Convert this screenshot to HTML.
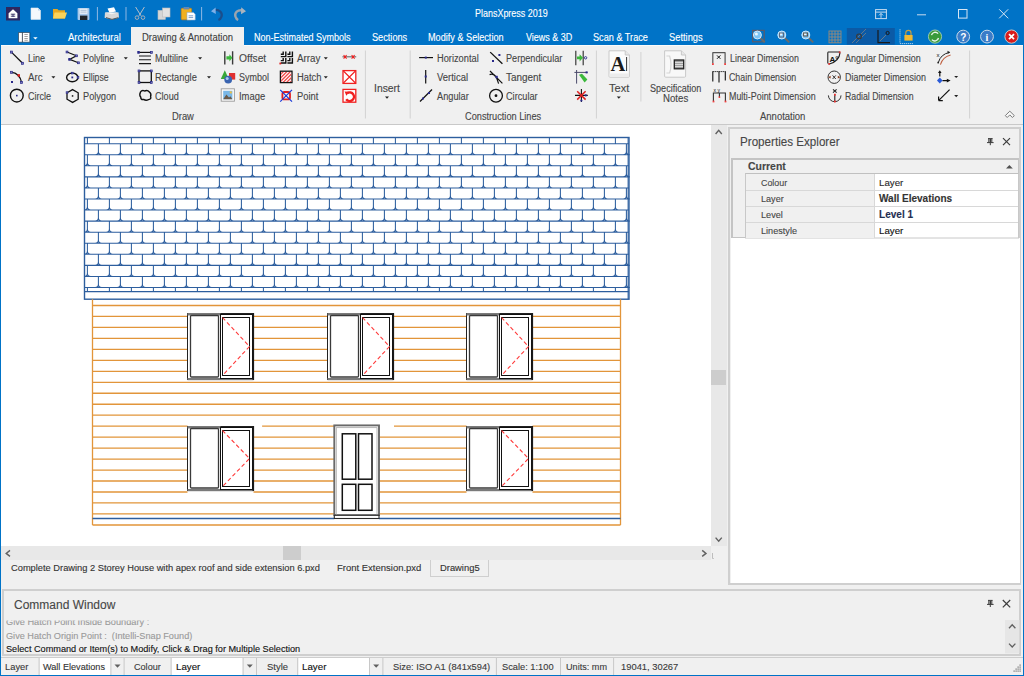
<!DOCTYPE html>
<html><head><meta charset="utf-8"><style>
html,body{margin:0;padding:0}
body{width:1024px;height:676px;overflow:hidden;position:relative;background:#f0f0f0;font-family:"Liberation Sans",sans-serif}
.t{position:absolute;white-space:nowrap;-webkit-text-stroke:0.12px currentColor}
</style></head><body>
<div style="position:absolute;left:0px;top:0px;width:1024px;height:45px;background:#0073c7"></div><div style="position:absolute;left:1px;top:45px;width:1022px;height:79px;background:#f0f0f0;border-top:1px solid #fbfbfb;box-sizing:border-box"></div><div style="position:absolute;left:1px;top:124px;width:1022px;height:1px;background:#c9c9c9"></div><div style="position:absolute;left:131px;top:27px;width:113px;height:19px;background:#f0f0f0"></div><div style="position:absolute;left:1px;top:125px;width:710px;height:421px;background:#ffffff"></div><svg width="1024" height="676" viewBox="0 0 1024 676" style="position:absolute;left:0;top:0"><defs><clipPath id="cv"><rect x="1" y="125" width="710" height="421"/></clipPath></defs><g clip-path="url(#cv)"><path d="M84.5 143.70H629.0M84.5 154.76H629.0M84.5 165.82H629.0M84.5 176.88H629.0M84.5 187.95H629.0M84.5 199.01H629.0M84.5 210.07H629.0M84.5 221.13H629.0M84.5 232.19H629.0M84.5 243.25H629.0M84.5 254.32H629.0M84.5 265.38H629.0M84.5 276.44H629.0M84.5 287.50H629.0M84.5 291.60H629.0M87.40 137.50V143.70M109.40 137.50V143.70M131.40 137.50V143.70M153.40 137.50V143.70M175.40 137.50V143.70M197.40 137.50V143.70M219.40 137.50V143.70M241.40 137.50V143.70M263.40 137.50V143.70M285.40 137.50V143.70M307.40 137.50V143.70M329.40 137.50V143.70M351.40 137.50V143.70M373.40 137.50V143.70M395.40 137.50V143.70M417.40 137.50V143.70M439.40 137.50V143.70M461.40 137.50V143.70M483.40 137.50V143.70M505.40 137.50V143.70M527.40 137.50V143.70M549.40 137.50V143.70M571.40 137.50V143.70M593.40 137.50V143.70M615.40 137.50V143.70M98.40 143.70V151.46Q98.40 154.76 95.10 154.76M98.40 151.46Q98.40 154.76 101.70 154.76M120.40 143.70V151.46Q120.40 154.76 117.10 154.76M120.40 151.46Q120.40 154.76 123.70 154.76M142.40 143.70V151.46Q142.40 154.76 139.10 154.76M142.40 151.46Q142.40 154.76 145.70 154.76M164.40 143.70V151.46Q164.40 154.76 161.10 154.76M164.40 151.46Q164.40 154.76 167.70 154.76M186.40 143.70V151.46Q186.40 154.76 183.10 154.76M186.40 151.46Q186.40 154.76 189.70 154.76M208.40 143.70V151.46Q208.40 154.76 205.10 154.76M208.40 151.46Q208.40 154.76 211.70 154.76M230.40 143.70V151.46Q230.40 154.76 227.10 154.76M230.40 151.46Q230.40 154.76 233.70 154.76M252.40 143.70V151.46Q252.40 154.76 249.10 154.76M252.40 151.46Q252.40 154.76 255.70 154.76M274.40 143.70V151.46Q274.40 154.76 271.10 154.76M274.40 151.46Q274.40 154.76 277.70 154.76M296.40 143.70V151.46Q296.40 154.76 293.10 154.76M296.40 151.46Q296.40 154.76 299.70 154.76M318.40 143.70V151.46Q318.40 154.76 315.10 154.76M318.40 151.46Q318.40 154.76 321.70 154.76M340.40 143.70V151.46Q340.40 154.76 337.10 154.76M340.40 151.46Q340.40 154.76 343.70 154.76M362.40 143.70V151.46Q362.40 154.76 359.10 154.76M362.40 151.46Q362.40 154.76 365.70 154.76M384.40 143.70V151.46Q384.40 154.76 381.10 154.76M384.40 151.46Q384.40 154.76 387.70 154.76M406.40 143.70V151.46Q406.40 154.76 403.10 154.76M406.40 151.46Q406.40 154.76 409.70 154.76M428.40 143.70V151.46Q428.40 154.76 425.10 154.76M428.40 151.46Q428.40 154.76 431.70 154.76M450.40 143.70V151.46Q450.40 154.76 447.10 154.76M450.40 151.46Q450.40 154.76 453.70 154.76M472.40 143.70V151.46Q472.40 154.76 469.10 154.76M472.40 151.46Q472.40 154.76 475.70 154.76M494.40 143.70V151.46Q494.40 154.76 491.10 154.76M494.40 151.46Q494.40 154.76 497.70 154.76M516.40 143.70V151.46Q516.40 154.76 513.10 154.76M516.40 151.46Q516.40 154.76 519.70 154.76M538.40 143.70V151.46Q538.40 154.76 535.10 154.76M538.40 151.46Q538.40 154.76 541.70 154.76M560.40 143.70V151.46Q560.40 154.76 557.10 154.76M560.40 151.46Q560.40 154.76 563.70 154.76M582.40 143.70V151.46Q582.40 154.76 579.10 154.76M582.40 151.46Q582.40 154.76 585.70 154.76M604.40 143.70V151.46Q604.40 154.76 601.10 154.76M604.40 151.46Q604.40 154.76 607.70 154.76M626.40 143.70V151.46Q626.40 154.76 623.10 154.76M626.40 151.46Q626.40 154.76 629.70 154.76M87.40 154.76V162.52Q87.40 165.82 84.10 165.82M87.40 162.52Q87.40 165.82 90.70 165.82M109.40 154.76V162.52Q109.40 165.82 106.10 165.82M109.40 162.52Q109.40 165.82 112.70 165.82M131.40 154.76V162.52Q131.40 165.82 128.10 165.82M131.40 162.52Q131.40 165.82 134.70 165.82M153.40 154.76V162.52Q153.40 165.82 150.10 165.82M153.40 162.52Q153.40 165.82 156.70 165.82M175.40 154.76V162.52Q175.40 165.82 172.10 165.82M175.40 162.52Q175.40 165.82 178.70 165.82M197.40 154.76V162.52Q197.40 165.82 194.10 165.82M197.40 162.52Q197.40 165.82 200.70 165.82M219.40 154.76V162.52Q219.40 165.82 216.10 165.82M219.40 162.52Q219.40 165.82 222.70 165.82M241.40 154.76V162.52Q241.40 165.82 238.10 165.82M241.40 162.52Q241.40 165.82 244.70 165.82M263.40 154.76V162.52Q263.40 165.82 260.10 165.82M263.40 162.52Q263.40 165.82 266.70 165.82M285.40 154.76V162.52Q285.40 165.82 282.10 165.82M285.40 162.52Q285.40 165.82 288.70 165.82M307.40 154.76V162.52Q307.40 165.82 304.10 165.82M307.40 162.52Q307.40 165.82 310.70 165.82M329.40 154.76V162.52Q329.40 165.82 326.10 165.82M329.40 162.52Q329.40 165.82 332.70 165.82M351.40 154.76V162.52Q351.40 165.82 348.10 165.82M351.40 162.52Q351.40 165.82 354.70 165.82M373.40 154.76V162.52Q373.40 165.82 370.10 165.82M373.40 162.52Q373.40 165.82 376.70 165.82M395.40 154.76V162.52Q395.40 165.82 392.10 165.82M395.40 162.52Q395.40 165.82 398.70 165.82M417.40 154.76V162.52Q417.40 165.82 414.10 165.82M417.40 162.52Q417.40 165.82 420.70 165.82M439.40 154.76V162.52Q439.40 165.82 436.10 165.82M439.40 162.52Q439.40 165.82 442.70 165.82M461.40 154.76V162.52Q461.40 165.82 458.10 165.82M461.40 162.52Q461.40 165.82 464.70 165.82M483.40 154.76V162.52Q483.40 165.82 480.10 165.82M483.40 162.52Q483.40 165.82 486.70 165.82M505.40 154.76V162.52Q505.40 165.82 502.10 165.82M505.40 162.52Q505.40 165.82 508.70 165.82M527.40 154.76V162.52Q527.40 165.82 524.10 165.82M527.40 162.52Q527.40 165.82 530.70 165.82M549.40 154.76V162.52Q549.40 165.82 546.10 165.82M549.40 162.52Q549.40 165.82 552.70 165.82M571.40 154.76V162.52Q571.40 165.82 568.10 165.82M571.40 162.52Q571.40 165.82 574.70 165.82M593.40 154.76V162.52Q593.40 165.82 590.10 165.82M593.40 162.52Q593.40 165.82 596.70 165.82M615.40 154.76V162.52Q615.40 165.82 612.10 165.82M615.40 162.52Q615.40 165.82 618.70 165.82M98.40 165.82V173.58Q98.40 176.88 95.10 176.88M98.40 173.58Q98.40 176.88 101.70 176.88M120.40 165.82V173.58Q120.40 176.88 117.10 176.88M120.40 173.58Q120.40 176.88 123.70 176.88M142.40 165.82V173.58Q142.40 176.88 139.10 176.88M142.40 173.58Q142.40 176.88 145.70 176.88M164.40 165.82V173.58Q164.40 176.88 161.10 176.88M164.40 173.58Q164.40 176.88 167.70 176.88M186.40 165.82V173.58Q186.40 176.88 183.10 176.88M186.40 173.58Q186.40 176.88 189.70 176.88M208.40 165.82V173.58Q208.40 176.88 205.10 176.88M208.40 173.58Q208.40 176.88 211.70 176.88M230.40 165.82V173.58Q230.40 176.88 227.10 176.88M230.40 173.58Q230.40 176.88 233.70 176.88M252.40 165.82V173.58Q252.40 176.88 249.10 176.88M252.40 173.58Q252.40 176.88 255.70 176.88M274.40 165.82V173.58Q274.40 176.88 271.10 176.88M274.40 173.58Q274.40 176.88 277.70 176.88M296.40 165.82V173.58Q296.40 176.88 293.10 176.88M296.40 173.58Q296.40 176.88 299.70 176.88M318.40 165.82V173.58Q318.40 176.88 315.10 176.88M318.40 173.58Q318.40 176.88 321.70 176.88M340.40 165.82V173.58Q340.40 176.88 337.10 176.88M340.40 173.58Q340.40 176.88 343.70 176.88M362.40 165.82V173.58Q362.40 176.88 359.10 176.88M362.40 173.58Q362.40 176.88 365.70 176.88M384.40 165.82V173.58Q384.40 176.88 381.10 176.88M384.40 173.58Q384.40 176.88 387.70 176.88M406.40 165.82V173.58Q406.40 176.88 403.10 176.88M406.40 173.58Q406.40 176.88 409.70 176.88M428.40 165.82V173.58Q428.40 176.88 425.10 176.88M428.40 173.58Q428.40 176.88 431.70 176.88M450.40 165.82V173.58Q450.40 176.88 447.10 176.88M450.40 173.58Q450.40 176.88 453.70 176.88M472.40 165.82V173.58Q472.40 176.88 469.10 176.88M472.40 173.58Q472.40 176.88 475.70 176.88M494.40 165.82V173.58Q494.40 176.88 491.10 176.88M494.40 173.58Q494.40 176.88 497.70 176.88M516.40 165.82V173.58Q516.40 176.88 513.10 176.88M516.40 173.58Q516.40 176.88 519.70 176.88M538.40 165.82V173.58Q538.40 176.88 535.10 176.88M538.40 173.58Q538.40 176.88 541.70 176.88M560.40 165.82V173.58Q560.40 176.88 557.10 176.88M560.40 173.58Q560.40 176.88 563.70 176.88M582.40 165.82V173.58Q582.40 176.88 579.10 176.88M582.40 173.58Q582.40 176.88 585.70 176.88M604.40 165.82V173.58Q604.40 176.88 601.10 176.88M604.40 173.58Q604.40 176.88 607.70 176.88M626.40 165.82V173.58Q626.40 176.88 623.10 176.88M626.40 173.58Q626.40 176.88 629.70 176.88M87.40 176.88V184.65Q87.40 187.95 84.10 187.95M87.40 184.65Q87.40 187.95 90.70 187.95M109.40 176.88V184.65Q109.40 187.95 106.10 187.95M109.40 184.65Q109.40 187.95 112.70 187.95M131.40 176.88V184.65Q131.40 187.95 128.10 187.95M131.40 184.65Q131.40 187.95 134.70 187.95M153.40 176.88V184.65Q153.40 187.95 150.10 187.95M153.40 184.65Q153.40 187.95 156.70 187.95M175.40 176.88V184.65Q175.40 187.95 172.10 187.95M175.40 184.65Q175.40 187.95 178.70 187.95M197.40 176.88V184.65Q197.40 187.95 194.10 187.95M197.40 184.65Q197.40 187.95 200.70 187.95M219.40 176.88V184.65Q219.40 187.95 216.10 187.95M219.40 184.65Q219.40 187.95 222.70 187.95M241.40 176.88V184.65Q241.40 187.95 238.10 187.95M241.40 184.65Q241.40 187.95 244.70 187.95M263.40 176.88V184.65Q263.40 187.95 260.10 187.95M263.40 184.65Q263.40 187.95 266.70 187.95M285.40 176.88V184.65Q285.40 187.95 282.10 187.95M285.40 184.65Q285.40 187.95 288.70 187.95M307.40 176.88V184.65Q307.40 187.95 304.10 187.95M307.40 184.65Q307.40 187.95 310.70 187.95M329.40 176.88V184.65Q329.40 187.95 326.10 187.95M329.40 184.65Q329.40 187.95 332.70 187.95M351.40 176.88V184.65Q351.40 187.95 348.10 187.95M351.40 184.65Q351.40 187.95 354.70 187.95M373.40 176.88V184.65Q373.40 187.95 370.10 187.95M373.40 184.65Q373.40 187.95 376.70 187.95M395.40 176.88V184.65Q395.40 187.95 392.10 187.95M395.40 184.65Q395.40 187.95 398.70 187.95M417.40 176.88V184.65Q417.40 187.95 414.10 187.95M417.40 184.65Q417.40 187.95 420.70 187.95M439.40 176.88V184.65Q439.40 187.95 436.10 187.95M439.40 184.65Q439.40 187.95 442.70 187.95M461.40 176.88V184.65Q461.40 187.95 458.10 187.95M461.40 184.65Q461.40 187.95 464.70 187.95M483.40 176.88V184.65Q483.40 187.95 480.10 187.95M483.40 184.65Q483.40 187.95 486.70 187.95M505.40 176.88V184.65Q505.40 187.95 502.10 187.95M505.40 184.65Q505.40 187.95 508.70 187.95M527.40 176.88V184.65Q527.40 187.95 524.10 187.95M527.40 184.65Q527.40 187.95 530.70 187.95M549.40 176.88V184.65Q549.40 187.95 546.10 187.95M549.40 184.65Q549.40 187.95 552.70 187.95M571.40 176.88V184.65Q571.40 187.95 568.10 187.95M571.40 184.65Q571.40 187.95 574.70 187.95M593.40 176.88V184.65Q593.40 187.95 590.10 187.95M593.40 184.65Q593.40 187.95 596.70 187.95M615.40 176.88V184.65Q615.40 187.95 612.10 187.95M615.40 184.65Q615.40 187.95 618.70 187.95M98.40 187.95V195.71Q98.40 199.01 95.10 199.01M98.40 195.71Q98.40 199.01 101.70 199.01M120.40 187.95V195.71Q120.40 199.01 117.10 199.01M120.40 195.71Q120.40 199.01 123.70 199.01M142.40 187.95V195.71Q142.40 199.01 139.10 199.01M142.40 195.71Q142.40 199.01 145.70 199.01M164.40 187.95V195.71Q164.40 199.01 161.10 199.01M164.40 195.71Q164.40 199.01 167.70 199.01M186.40 187.95V195.71Q186.40 199.01 183.10 199.01M186.40 195.71Q186.40 199.01 189.70 199.01M208.40 187.95V195.71Q208.40 199.01 205.10 199.01M208.40 195.71Q208.40 199.01 211.70 199.01M230.40 187.95V195.71Q230.40 199.01 227.10 199.01M230.40 195.71Q230.40 199.01 233.70 199.01M252.40 187.95V195.71Q252.40 199.01 249.10 199.01M252.40 195.71Q252.40 199.01 255.70 199.01M274.40 187.95V195.71Q274.40 199.01 271.10 199.01M274.40 195.71Q274.40 199.01 277.70 199.01M296.40 187.95V195.71Q296.40 199.01 293.10 199.01M296.40 195.71Q296.40 199.01 299.70 199.01M318.40 187.95V195.71Q318.40 199.01 315.10 199.01M318.40 195.71Q318.40 199.01 321.70 199.01M340.40 187.95V195.71Q340.40 199.01 337.10 199.01M340.40 195.71Q340.40 199.01 343.70 199.01M362.40 187.95V195.71Q362.40 199.01 359.10 199.01M362.40 195.71Q362.40 199.01 365.70 199.01M384.40 187.95V195.71Q384.40 199.01 381.10 199.01M384.40 195.71Q384.40 199.01 387.70 199.01M406.40 187.95V195.71Q406.40 199.01 403.10 199.01M406.40 195.71Q406.40 199.01 409.70 199.01M428.40 187.95V195.71Q428.40 199.01 425.10 199.01M428.40 195.71Q428.40 199.01 431.70 199.01M450.40 187.95V195.71Q450.40 199.01 447.10 199.01M450.40 195.71Q450.40 199.01 453.70 199.01M472.40 187.95V195.71Q472.40 199.01 469.10 199.01M472.40 195.71Q472.40 199.01 475.70 199.01M494.40 187.95V195.71Q494.40 199.01 491.10 199.01M494.40 195.71Q494.40 199.01 497.70 199.01M516.40 187.95V195.71Q516.40 199.01 513.10 199.01M516.40 195.71Q516.40 199.01 519.70 199.01M538.40 187.95V195.71Q538.40 199.01 535.10 199.01M538.40 195.71Q538.40 199.01 541.70 199.01M560.40 187.95V195.71Q560.40 199.01 557.10 199.01M560.40 195.71Q560.40 199.01 563.70 199.01M582.40 187.95V195.71Q582.40 199.01 579.10 199.01M582.40 195.71Q582.40 199.01 585.70 199.01M604.40 187.95V195.71Q604.40 199.01 601.10 199.01M604.40 195.71Q604.40 199.01 607.70 199.01M626.40 187.95V195.71Q626.40 199.01 623.10 199.01M626.40 195.71Q626.40 199.01 629.70 199.01M87.40 199.01V206.77Q87.40 210.07 84.10 210.07M87.40 206.77Q87.40 210.07 90.70 210.07M109.40 199.01V206.77Q109.40 210.07 106.10 210.07M109.40 206.77Q109.40 210.07 112.70 210.07M131.40 199.01V206.77Q131.40 210.07 128.10 210.07M131.40 206.77Q131.40 210.07 134.70 210.07M153.40 199.01V206.77Q153.40 210.07 150.10 210.07M153.40 206.77Q153.40 210.07 156.70 210.07M175.40 199.01V206.77Q175.40 210.07 172.10 210.07M175.40 206.77Q175.40 210.07 178.70 210.07M197.40 199.01V206.77Q197.40 210.07 194.10 210.07M197.40 206.77Q197.40 210.07 200.70 210.07M219.40 199.01V206.77Q219.40 210.07 216.10 210.07M219.40 206.77Q219.40 210.07 222.70 210.07M241.40 199.01V206.77Q241.40 210.07 238.10 210.07M241.40 206.77Q241.40 210.07 244.70 210.07M263.40 199.01V206.77Q263.40 210.07 260.10 210.07M263.40 206.77Q263.40 210.07 266.70 210.07M285.40 199.01V206.77Q285.40 210.07 282.10 210.07M285.40 206.77Q285.40 210.07 288.70 210.07M307.40 199.01V206.77Q307.40 210.07 304.10 210.07M307.40 206.77Q307.40 210.07 310.70 210.07M329.40 199.01V206.77Q329.40 210.07 326.10 210.07M329.40 206.77Q329.40 210.07 332.70 210.07M351.40 199.01V206.77Q351.40 210.07 348.10 210.07M351.40 206.77Q351.40 210.07 354.70 210.07M373.40 199.01V206.77Q373.40 210.07 370.10 210.07M373.40 206.77Q373.40 210.07 376.70 210.07M395.40 199.01V206.77Q395.40 210.07 392.10 210.07M395.40 206.77Q395.40 210.07 398.70 210.07M417.40 199.01V206.77Q417.40 210.07 414.10 210.07M417.40 206.77Q417.40 210.07 420.70 210.07M439.40 199.01V206.77Q439.40 210.07 436.10 210.07M439.40 206.77Q439.40 210.07 442.70 210.07M461.40 199.01V206.77Q461.40 210.07 458.10 210.07M461.40 206.77Q461.40 210.07 464.70 210.07M483.40 199.01V206.77Q483.40 210.07 480.10 210.07M483.40 206.77Q483.40 210.07 486.70 210.07M505.40 199.01V206.77Q505.40 210.07 502.10 210.07M505.40 206.77Q505.40 210.07 508.70 210.07M527.40 199.01V206.77Q527.40 210.07 524.10 210.07M527.40 206.77Q527.40 210.07 530.70 210.07M549.40 199.01V206.77Q549.40 210.07 546.10 210.07M549.40 206.77Q549.40 210.07 552.70 210.07M571.40 199.01V206.77Q571.40 210.07 568.10 210.07M571.40 206.77Q571.40 210.07 574.70 210.07M593.40 199.01V206.77Q593.40 210.07 590.10 210.07M593.40 206.77Q593.40 210.07 596.70 210.07M615.40 199.01V206.77Q615.40 210.07 612.10 210.07M615.40 206.77Q615.40 210.07 618.70 210.07M98.40 210.07V217.83Q98.40 221.13 95.10 221.13M98.40 217.83Q98.40 221.13 101.70 221.13M120.40 210.07V217.83Q120.40 221.13 117.10 221.13M120.40 217.83Q120.40 221.13 123.70 221.13M142.40 210.07V217.83Q142.40 221.13 139.10 221.13M142.40 217.83Q142.40 221.13 145.70 221.13M164.40 210.07V217.83Q164.40 221.13 161.10 221.13M164.40 217.83Q164.40 221.13 167.70 221.13M186.40 210.07V217.83Q186.40 221.13 183.10 221.13M186.40 217.83Q186.40 221.13 189.70 221.13M208.40 210.07V217.83Q208.40 221.13 205.10 221.13M208.40 217.83Q208.40 221.13 211.70 221.13M230.40 210.07V217.83Q230.40 221.13 227.10 221.13M230.40 217.83Q230.40 221.13 233.70 221.13M252.40 210.07V217.83Q252.40 221.13 249.10 221.13M252.40 217.83Q252.40 221.13 255.70 221.13M274.40 210.07V217.83Q274.40 221.13 271.10 221.13M274.40 217.83Q274.40 221.13 277.70 221.13M296.40 210.07V217.83Q296.40 221.13 293.10 221.13M296.40 217.83Q296.40 221.13 299.70 221.13M318.40 210.07V217.83Q318.40 221.13 315.10 221.13M318.40 217.83Q318.40 221.13 321.70 221.13M340.40 210.07V217.83Q340.40 221.13 337.10 221.13M340.40 217.83Q340.40 221.13 343.70 221.13M362.40 210.07V217.83Q362.40 221.13 359.10 221.13M362.40 217.83Q362.40 221.13 365.70 221.13M384.40 210.07V217.83Q384.40 221.13 381.10 221.13M384.40 217.83Q384.40 221.13 387.70 221.13M406.40 210.07V217.83Q406.40 221.13 403.10 221.13M406.40 217.83Q406.40 221.13 409.70 221.13M428.40 210.07V217.83Q428.40 221.13 425.10 221.13M428.40 217.83Q428.40 221.13 431.70 221.13M450.40 210.07V217.83Q450.40 221.13 447.10 221.13M450.40 217.83Q450.40 221.13 453.70 221.13M472.40 210.07V217.83Q472.40 221.13 469.10 221.13M472.40 217.83Q472.40 221.13 475.70 221.13M494.40 210.07V217.83Q494.40 221.13 491.10 221.13M494.40 217.83Q494.40 221.13 497.70 221.13M516.40 210.07V217.83Q516.40 221.13 513.10 221.13M516.40 217.83Q516.40 221.13 519.70 221.13M538.40 210.07V217.83Q538.40 221.13 535.10 221.13M538.40 217.83Q538.40 221.13 541.70 221.13M560.40 210.07V217.83Q560.40 221.13 557.10 221.13M560.40 217.83Q560.40 221.13 563.70 221.13M582.40 210.07V217.83Q582.40 221.13 579.10 221.13M582.40 217.83Q582.40 221.13 585.70 221.13M604.40 210.07V217.83Q604.40 221.13 601.10 221.13M604.40 217.83Q604.40 221.13 607.70 221.13M626.40 210.07V217.83Q626.40 221.13 623.10 221.13M626.40 217.83Q626.40 221.13 629.70 221.13M87.40 221.13V228.89Q87.40 232.19 84.10 232.19M87.40 228.89Q87.40 232.19 90.70 232.19M109.40 221.13V228.89Q109.40 232.19 106.10 232.19M109.40 228.89Q109.40 232.19 112.70 232.19M131.40 221.13V228.89Q131.40 232.19 128.10 232.19M131.40 228.89Q131.40 232.19 134.70 232.19M153.40 221.13V228.89Q153.40 232.19 150.10 232.19M153.40 228.89Q153.40 232.19 156.70 232.19M175.40 221.13V228.89Q175.40 232.19 172.10 232.19M175.40 228.89Q175.40 232.19 178.70 232.19M197.40 221.13V228.89Q197.40 232.19 194.10 232.19M197.40 228.89Q197.40 232.19 200.70 232.19M219.40 221.13V228.89Q219.40 232.19 216.10 232.19M219.40 228.89Q219.40 232.19 222.70 232.19M241.40 221.13V228.89Q241.40 232.19 238.10 232.19M241.40 228.89Q241.40 232.19 244.70 232.19M263.40 221.13V228.89Q263.40 232.19 260.10 232.19M263.40 228.89Q263.40 232.19 266.70 232.19M285.40 221.13V228.89Q285.40 232.19 282.10 232.19M285.40 228.89Q285.40 232.19 288.70 232.19M307.40 221.13V228.89Q307.40 232.19 304.10 232.19M307.40 228.89Q307.40 232.19 310.70 232.19M329.40 221.13V228.89Q329.40 232.19 326.10 232.19M329.40 228.89Q329.40 232.19 332.70 232.19M351.40 221.13V228.89Q351.40 232.19 348.10 232.19M351.40 228.89Q351.40 232.19 354.70 232.19M373.40 221.13V228.89Q373.40 232.19 370.10 232.19M373.40 228.89Q373.40 232.19 376.70 232.19M395.40 221.13V228.89Q395.40 232.19 392.10 232.19M395.40 228.89Q395.40 232.19 398.70 232.19M417.40 221.13V228.89Q417.40 232.19 414.10 232.19M417.40 228.89Q417.40 232.19 420.70 232.19M439.40 221.13V228.89Q439.40 232.19 436.10 232.19M439.40 228.89Q439.40 232.19 442.70 232.19M461.40 221.13V228.89Q461.40 232.19 458.10 232.19M461.40 228.89Q461.40 232.19 464.70 232.19M483.40 221.13V228.89Q483.40 232.19 480.10 232.19M483.40 228.89Q483.40 232.19 486.70 232.19M505.40 221.13V228.89Q505.40 232.19 502.10 232.19M505.40 228.89Q505.40 232.19 508.70 232.19M527.40 221.13V228.89Q527.40 232.19 524.10 232.19M527.40 228.89Q527.40 232.19 530.70 232.19M549.40 221.13V228.89Q549.40 232.19 546.10 232.19M549.40 228.89Q549.40 232.19 552.70 232.19M571.40 221.13V228.89Q571.40 232.19 568.10 232.19M571.40 228.89Q571.40 232.19 574.70 232.19M593.40 221.13V228.89Q593.40 232.19 590.10 232.19M593.40 228.89Q593.40 232.19 596.70 232.19M615.40 221.13V228.89Q615.40 232.19 612.10 232.19M615.40 228.89Q615.40 232.19 618.70 232.19M98.40 232.19V239.95Q98.40 243.25 95.10 243.25M98.40 239.95Q98.40 243.25 101.70 243.25M120.40 232.19V239.95Q120.40 243.25 117.10 243.25M120.40 239.95Q120.40 243.25 123.70 243.25M142.40 232.19V239.95Q142.40 243.25 139.10 243.25M142.40 239.95Q142.40 243.25 145.70 243.25M164.40 232.19V239.95Q164.40 243.25 161.10 243.25M164.40 239.95Q164.40 243.25 167.70 243.25M186.40 232.19V239.95Q186.40 243.25 183.10 243.25M186.40 239.95Q186.40 243.25 189.70 243.25M208.40 232.19V239.95Q208.40 243.25 205.10 243.25M208.40 239.95Q208.40 243.25 211.70 243.25M230.40 232.19V239.95Q230.40 243.25 227.10 243.25M230.40 239.95Q230.40 243.25 233.70 243.25M252.40 232.19V239.95Q252.40 243.25 249.10 243.25M252.40 239.95Q252.40 243.25 255.70 243.25M274.40 232.19V239.95Q274.40 243.25 271.10 243.25M274.40 239.95Q274.40 243.25 277.70 243.25M296.40 232.19V239.95Q296.40 243.25 293.10 243.25M296.40 239.95Q296.40 243.25 299.70 243.25M318.40 232.19V239.95Q318.40 243.25 315.10 243.25M318.40 239.95Q318.40 243.25 321.70 243.25M340.40 232.19V239.95Q340.40 243.25 337.10 243.25M340.40 239.95Q340.40 243.25 343.70 243.25M362.40 232.19V239.95Q362.40 243.25 359.10 243.25M362.40 239.95Q362.40 243.25 365.70 243.25M384.40 232.19V239.95Q384.40 243.25 381.10 243.25M384.40 239.95Q384.40 243.25 387.70 243.25M406.40 232.19V239.95Q406.40 243.25 403.10 243.25M406.40 239.95Q406.40 243.25 409.70 243.25M428.40 232.19V239.95Q428.40 243.25 425.10 243.25M428.40 239.95Q428.40 243.25 431.70 243.25M450.40 232.19V239.95Q450.40 243.25 447.10 243.25M450.40 239.95Q450.40 243.25 453.70 243.25M472.40 232.19V239.95Q472.40 243.25 469.10 243.25M472.40 239.95Q472.40 243.25 475.70 243.25M494.40 232.19V239.95Q494.40 243.25 491.10 243.25M494.40 239.95Q494.40 243.25 497.70 243.25M516.40 232.19V239.95Q516.40 243.25 513.10 243.25M516.40 239.95Q516.40 243.25 519.70 243.25M538.40 232.19V239.95Q538.40 243.25 535.10 243.25M538.40 239.95Q538.40 243.25 541.70 243.25M560.40 232.19V239.95Q560.40 243.25 557.10 243.25M560.40 239.95Q560.40 243.25 563.70 243.25M582.40 232.19V239.95Q582.40 243.25 579.10 243.25M582.40 239.95Q582.40 243.25 585.70 243.25M604.40 232.19V239.95Q604.40 243.25 601.10 243.25M604.40 239.95Q604.40 243.25 607.70 243.25M626.40 232.19V239.95Q626.40 243.25 623.10 243.25M626.40 239.95Q626.40 243.25 629.70 243.25M87.40 243.25V251.02Q87.40 254.32 84.10 254.32M87.40 251.02Q87.40 254.32 90.70 254.32M109.40 243.25V251.02Q109.40 254.32 106.10 254.32M109.40 251.02Q109.40 254.32 112.70 254.32M131.40 243.25V251.02Q131.40 254.32 128.10 254.32M131.40 251.02Q131.40 254.32 134.70 254.32M153.40 243.25V251.02Q153.40 254.32 150.10 254.32M153.40 251.02Q153.40 254.32 156.70 254.32M175.40 243.25V251.02Q175.40 254.32 172.10 254.32M175.40 251.02Q175.40 254.32 178.70 254.32M197.40 243.25V251.02Q197.40 254.32 194.10 254.32M197.40 251.02Q197.40 254.32 200.70 254.32M219.40 243.25V251.02Q219.40 254.32 216.10 254.32M219.40 251.02Q219.40 254.32 222.70 254.32M241.40 243.25V251.02Q241.40 254.32 238.10 254.32M241.40 251.02Q241.40 254.32 244.70 254.32M263.40 243.25V251.02Q263.40 254.32 260.10 254.32M263.40 251.02Q263.40 254.32 266.70 254.32M285.40 243.25V251.02Q285.40 254.32 282.10 254.32M285.40 251.02Q285.40 254.32 288.70 254.32M307.40 243.25V251.02Q307.40 254.32 304.10 254.32M307.40 251.02Q307.40 254.32 310.70 254.32M329.40 243.25V251.02Q329.40 254.32 326.10 254.32M329.40 251.02Q329.40 254.32 332.70 254.32M351.40 243.25V251.02Q351.40 254.32 348.10 254.32M351.40 251.02Q351.40 254.32 354.70 254.32M373.40 243.25V251.02Q373.40 254.32 370.10 254.32M373.40 251.02Q373.40 254.32 376.70 254.32M395.40 243.25V251.02Q395.40 254.32 392.10 254.32M395.40 251.02Q395.40 254.32 398.70 254.32M417.40 243.25V251.02Q417.40 254.32 414.10 254.32M417.40 251.02Q417.40 254.32 420.70 254.32M439.40 243.25V251.02Q439.40 254.32 436.10 254.32M439.40 251.02Q439.40 254.32 442.70 254.32M461.40 243.25V251.02Q461.40 254.32 458.10 254.32M461.40 251.02Q461.40 254.32 464.70 254.32M483.40 243.25V251.02Q483.40 254.32 480.10 254.32M483.40 251.02Q483.40 254.32 486.70 254.32M505.40 243.25V251.02Q505.40 254.32 502.10 254.32M505.40 251.02Q505.40 254.32 508.70 254.32M527.40 243.25V251.02Q527.40 254.32 524.10 254.32M527.40 251.02Q527.40 254.32 530.70 254.32M549.40 243.25V251.02Q549.40 254.32 546.10 254.32M549.40 251.02Q549.40 254.32 552.70 254.32M571.40 243.25V251.02Q571.40 254.32 568.10 254.32M571.40 251.02Q571.40 254.32 574.70 254.32M593.40 243.25V251.02Q593.40 254.32 590.10 254.32M593.40 251.02Q593.40 254.32 596.70 254.32M615.40 243.25V251.02Q615.40 254.32 612.10 254.32M615.40 251.02Q615.40 254.32 618.70 254.32M98.40 254.32V262.08Q98.40 265.38 95.10 265.38M98.40 262.08Q98.40 265.38 101.70 265.38M120.40 254.32V262.08Q120.40 265.38 117.10 265.38M120.40 262.08Q120.40 265.38 123.70 265.38M142.40 254.32V262.08Q142.40 265.38 139.10 265.38M142.40 262.08Q142.40 265.38 145.70 265.38M164.40 254.32V262.08Q164.40 265.38 161.10 265.38M164.40 262.08Q164.40 265.38 167.70 265.38M186.40 254.32V262.08Q186.40 265.38 183.10 265.38M186.40 262.08Q186.40 265.38 189.70 265.38M208.40 254.32V262.08Q208.40 265.38 205.10 265.38M208.40 262.08Q208.40 265.38 211.70 265.38M230.40 254.32V262.08Q230.40 265.38 227.10 265.38M230.40 262.08Q230.40 265.38 233.70 265.38M252.40 254.32V262.08Q252.40 265.38 249.10 265.38M252.40 262.08Q252.40 265.38 255.70 265.38M274.40 254.32V262.08Q274.40 265.38 271.10 265.38M274.40 262.08Q274.40 265.38 277.70 265.38M296.40 254.32V262.08Q296.40 265.38 293.10 265.38M296.40 262.08Q296.40 265.38 299.70 265.38M318.40 254.32V262.08Q318.40 265.38 315.10 265.38M318.40 262.08Q318.40 265.38 321.70 265.38M340.40 254.32V262.08Q340.40 265.38 337.10 265.38M340.40 262.08Q340.40 265.38 343.70 265.38M362.40 254.32V262.08Q362.40 265.38 359.10 265.38M362.40 262.08Q362.40 265.38 365.70 265.38M384.40 254.32V262.08Q384.40 265.38 381.10 265.38M384.40 262.08Q384.40 265.38 387.70 265.38M406.40 254.32V262.08Q406.40 265.38 403.10 265.38M406.40 262.08Q406.40 265.38 409.70 265.38M428.40 254.32V262.08Q428.40 265.38 425.10 265.38M428.40 262.08Q428.40 265.38 431.70 265.38M450.40 254.32V262.08Q450.40 265.38 447.10 265.38M450.40 262.08Q450.40 265.38 453.70 265.38M472.40 254.32V262.08Q472.40 265.38 469.10 265.38M472.40 262.08Q472.40 265.38 475.70 265.38M494.40 254.32V262.08Q494.40 265.38 491.10 265.38M494.40 262.08Q494.40 265.38 497.70 265.38M516.40 254.32V262.08Q516.40 265.38 513.10 265.38M516.40 262.08Q516.40 265.38 519.70 265.38M538.40 254.32V262.08Q538.40 265.38 535.10 265.38M538.40 262.08Q538.40 265.38 541.70 265.38M560.40 254.32V262.08Q560.40 265.38 557.10 265.38M560.40 262.08Q560.40 265.38 563.70 265.38M582.40 254.32V262.08Q582.40 265.38 579.10 265.38M582.40 262.08Q582.40 265.38 585.70 265.38M604.40 254.32V262.08Q604.40 265.38 601.10 265.38M604.40 262.08Q604.40 265.38 607.70 265.38M626.40 254.32V262.08Q626.40 265.38 623.10 265.38M626.40 262.08Q626.40 265.38 629.70 265.38M87.40 265.38V273.14Q87.40 276.44 84.10 276.44M87.40 273.14Q87.40 276.44 90.70 276.44M109.40 265.38V273.14Q109.40 276.44 106.10 276.44M109.40 273.14Q109.40 276.44 112.70 276.44M131.40 265.38V273.14Q131.40 276.44 128.10 276.44M131.40 273.14Q131.40 276.44 134.70 276.44M153.40 265.38V273.14Q153.40 276.44 150.10 276.44M153.40 273.14Q153.40 276.44 156.70 276.44M175.40 265.38V273.14Q175.40 276.44 172.10 276.44M175.40 273.14Q175.40 276.44 178.70 276.44M197.40 265.38V273.14Q197.40 276.44 194.10 276.44M197.40 273.14Q197.40 276.44 200.70 276.44M219.40 265.38V273.14Q219.40 276.44 216.10 276.44M219.40 273.14Q219.40 276.44 222.70 276.44M241.40 265.38V273.14Q241.40 276.44 238.10 276.44M241.40 273.14Q241.40 276.44 244.70 276.44M263.40 265.38V273.14Q263.40 276.44 260.10 276.44M263.40 273.14Q263.40 276.44 266.70 276.44M285.40 265.38V273.14Q285.40 276.44 282.10 276.44M285.40 273.14Q285.40 276.44 288.70 276.44M307.40 265.38V273.14Q307.40 276.44 304.10 276.44M307.40 273.14Q307.40 276.44 310.70 276.44M329.40 265.38V273.14Q329.40 276.44 326.10 276.44M329.40 273.14Q329.40 276.44 332.70 276.44M351.40 265.38V273.14Q351.40 276.44 348.10 276.44M351.40 273.14Q351.40 276.44 354.70 276.44M373.40 265.38V273.14Q373.40 276.44 370.10 276.44M373.40 273.14Q373.40 276.44 376.70 276.44M395.40 265.38V273.14Q395.40 276.44 392.10 276.44M395.40 273.14Q395.40 276.44 398.70 276.44M417.40 265.38V273.14Q417.40 276.44 414.10 276.44M417.40 273.14Q417.40 276.44 420.70 276.44M439.40 265.38V273.14Q439.40 276.44 436.10 276.44M439.40 273.14Q439.40 276.44 442.70 276.44M461.40 265.38V273.14Q461.40 276.44 458.10 276.44M461.40 273.14Q461.40 276.44 464.70 276.44M483.40 265.38V273.14Q483.40 276.44 480.10 276.44M483.40 273.14Q483.40 276.44 486.70 276.44M505.40 265.38V273.14Q505.40 276.44 502.10 276.44M505.40 273.14Q505.40 276.44 508.70 276.44M527.40 265.38V273.14Q527.40 276.44 524.10 276.44M527.40 273.14Q527.40 276.44 530.70 276.44M549.40 265.38V273.14Q549.40 276.44 546.10 276.44M549.40 273.14Q549.40 276.44 552.70 276.44M571.40 265.38V273.14Q571.40 276.44 568.10 276.44M571.40 273.14Q571.40 276.44 574.70 276.44M593.40 265.38V273.14Q593.40 276.44 590.10 276.44M593.40 273.14Q593.40 276.44 596.70 276.44M615.40 265.38V273.14Q615.40 276.44 612.10 276.44M615.40 273.14Q615.40 276.44 618.70 276.44M98.40 276.44V284.20Q98.40 287.50 95.10 287.50M98.40 284.20Q98.40 287.50 101.70 287.50M120.40 276.44V284.20Q120.40 287.50 117.10 287.50M120.40 284.20Q120.40 287.50 123.70 287.50M142.40 276.44V284.20Q142.40 287.50 139.10 287.50M142.40 284.20Q142.40 287.50 145.70 287.50M164.40 276.44V284.20Q164.40 287.50 161.10 287.50M164.40 284.20Q164.40 287.50 167.70 287.50M186.40 276.44V284.20Q186.40 287.50 183.10 287.50M186.40 284.20Q186.40 287.50 189.70 287.50M208.40 276.44V284.20Q208.40 287.50 205.10 287.50M208.40 284.20Q208.40 287.50 211.70 287.50M230.40 276.44V284.20Q230.40 287.50 227.10 287.50M230.40 284.20Q230.40 287.50 233.70 287.50M252.40 276.44V284.20Q252.40 287.50 249.10 287.50M252.40 284.20Q252.40 287.50 255.70 287.50M274.40 276.44V284.20Q274.40 287.50 271.10 287.50M274.40 284.20Q274.40 287.50 277.70 287.50M296.40 276.44V284.20Q296.40 287.50 293.10 287.50M296.40 284.20Q296.40 287.50 299.70 287.50M318.40 276.44V284.20Q318.40 287.50 315.10 287.50M318.40 284.20Q318.40 287.50 321.70 287.50M340.40 276.44V284.20Q340.40 287.50 337.10 287.50M340.40 284.20Q340.40 287.50 343.70 287.50M362.40 276.44V284.20Q362.40 287.50 359.10 287.50M362.40 284.20Q362.40 287.50 365.70 287.50M384.40 276.44V284.20Q384.40 287.50 381.10 287.50M384.40 284.20Q384.40 287.50 387.70 287.50M406.40 276.44V284.20Q406.40 287.50 403.10 287.50M406.40 284.20Q406.40 287.50 409.70 287.50M428.40 276.44V284.20Q428.40 287.50 425.10 287.50M428.40 284.20Q428.40 287.50 431.70 287.50M450.40 276.44V284.20Q450.40 287.50 447.10 287.50M450.40 284.20Q450.40 287.50 453.70 287.50M472.40 276.44V284.20Q472.40 287.50 469.10 287.50M472.40 284.20Q472.40 287.50 475.70 287.50M494.40 276.44V284.20Q494.40 287.50 491.10 287.50M494.40 284.20Q494.40 287.50 497.70 287.50M516.40 276.44V284.20Q516.40 287.50 513.10 287.50M516.40 284.20Q516.40 287.50 519.70 287.50M538.40 276.44V284.20Q538.40 287.50 535.10 287.50M538.40 284.20Q538.40 287.50 541.70 287.50M560.40 276.44V284.20Q560.40 287.50 557.10 287.50M560.40 284.20Q560.40 287.50 563.70 287.50M582.40 276.44V284.20Q582.40 287.50 579.10 287.50M582.40 284.20Q582.40 287.50 585.70 287.50M604.40 276.44V284.20Q604.40 287.50 601.10 287.50M604.40 284.20Q604.40 287.50 607.70 287.50M626.40 276.44V284.20Q626.40 287.50 623.10 287.50M626.40 284.20Q626.40 287.50 629.70 287.50M87.40 287.50V291.60M109.40 287.50V291.60M131.40 287.50V291.60M153.40 287.50V291.60M175.40 287.50V291.60M197.40 287.50V291.60M219.40 287.50V291.60M241.40 287.50V291.60M263.40 287.50V291.60M285.40 287.50V291.60M307.40 287.50V291.60M329.40 287.50V291.60M351.40 287.50V291.60M373.40 287.50V291.60M395.40 287.50V291.60M417.40 287.50V291.60M439.40 287.50V291.60M461.40 287.50V291.60M483.40 287.50V291.60M505.40 287.50V291.60M527.40 287.50V291.60M549.40 287.50V291.60M571.40 287.50V291.60M593.40 287.50V291.60M615.40 287.50V291.60" fill="none" stroke="#2d5e9e" stroke-width="1.05"/><rect x="84.5" y="137.5" width="544.5" height="161.7" fill="none" stroke="#2d5e9e" stroke-width="1.4"/><path d="M628.1 137.5V299.2" stroke="#2d5e9e" stroke-width="1"/><path d="M92.5 299.2V525M620.5 299.2V525M92.5 525H620.5M92.50 305.50H620.50M92.50 316.47H187.50M253.50 316.47H327.50M393.50 316.47H466.50M532.50 316.47H620.50M92.50 327.44H187.50M253.50 327.44H327.50M393.50 327.44H466.50M532.50 327.44H620.50M92.50 338.41H187.50M253.50 338.41H327.50M393.50 338.41H466.50M532.50 338.41H620.50M92.50 349.38H187.50M253.50 349.38H327.50M393.50 349.38H466.50M532.50 349.38H620.50M92.50 360.35H187.50M253.50 360.35H327.50M393.50 360.35H466.50M532.50 360.35H620.50M92.50 371.32H187.50M253.50 371.32H327.50M393.50 371.32H466.50M532.50 371.32H620.50M92.50 382.29H620.50M92.50 393.26H620.50M92.50 404.23H620.50M92.50 415.20H620.50M92.50 426.17H187.50M262.10 426.17H334.30M394.00 426.17H466.50M532.50 426.17H620.50M92.50 437.14H187.50M253.50 437.14H334.30M379.00 437.14H466.50M532.50 437.14H620.50M92.50 448.11H187.50M253.50 448.11H334.30M379.00 448.11H466.50M532.50 448.11H620.50M92.50 459.08H187.50M253.50 459.08H334.30M379.00 459.08H466.50M532.50 459.08H620.50M92.50 470.05H187.50M253.50 470.05H334.30M379.00 470.05H466.50M532.50 470.05H620.50M92.50 481.02H187.50M253.50 481.02H334.30M379.00 481.02H466.50M532.50 481.02H620.50M92.50 491.99H187.50M253.50 491.99H334.30M379.00 491.99H466.50M532.50 491.99H620.50M92.50 502.96H334.30M379.00 502.96H620.50M92.50 513.93H334.30M379.00 513.93H620.50" fill="none" stroke="#e2953a" stroke-width="1.3"/><path d="M92.5 518.5H334.3M379 518.5H620.5" stroke="#2d5e9e" stroke-width="1.3"/><rect x="187.5" y="313.5" width="66" height="66" fill="#fff" stroke="#222" stroke-width="1"/><rect x="187.5" y="313" width="33" height="2.5" fill="#7a7a7a"/><rect x="187.5" y="378" width="66" height="2.2" fill="#7a7a7a"/><rect x="190.5" y="315.5" width="28" height="61.5" rx="1" fill="#fff" stroke="#3a3a3a" stroke-width="1.3"/><rect x="220.5" y="314.5" width="32" height="64" fill="#fff" stroke="#111" stroke-width="1"/><path d="M253.3 313V380" stroke="#1a1a1a" stroke-width="1.6"/><rect x="222.5" y="317.5" width="27" height="58" fill="none" stroke="#111" stroke-width="1"/><path d="M222.5 317.5L249.5 346.5L222.5 375.5" fill="none" stroke="#ff3b3b" stroke-width="1.1" stroke-dasharray="4 2.6"/><rect x="327.5" y="313.5" width="66" height="66" fill="#fff" stroke="#222" stroke-width="1"/><rect x="327.5" y="313" width="33" height="2.5" fill="#7a7a7a"/><rect x="327.5" y="378" width="66" height="2.2" fill="#7a7a7a"/><rect x="330.5" y="315.5" width="28" height="61.5" rx="1" fill="#fff" stroke="#3a3a3a" stroke-width="1.3"/><rect x="360.5" y="314.5" width="32" height="64" fill="#fff" stroke="#111" stroke-width="1"/><path d="M393.3 313V380" stroke="#1a1a1a" stroke-width="1.6"/><rect x="362.5" y="317.5" width="27" height="58" fill="none" stroke="#111" stroke-width="1"/><path d="M362.5 317.5L389.5 346.5L362.5 375.5" fill="none" stroke="#ff3b3b" stroke-width="1.1" stroke-dasharray="4 2.6"/><rect x="466.5" y="313.5" width="66" height="66" fill="#fff" stroke="#222" stroke-width="1"/><rect x="466.5" y="313" width="33" height="2.5" fill="#7a7a7a"/><rect x="466.5" y="378" width="66" height="2.2" fill="#7a7a7a"/><rect x="469.5" y="315.5" width="28" height="61.5" rx="1" fill="#fff" stroke="#3a3a3a" stroke-width="1.3"/><rect x="499.5" y="314.5" width="32" height="64" fill="#fff" stroke="#111" stroke-width="1"/><path d="M532.3 313V380" stroke="#1a1a1a" stroke-width="1.6"/><rect x="501.5" y="317.5" width="27" height="58" fill="none" stroke="#111" stroke-width="1"/><path d="M501.5 317.5L528.5 346.5L501.5 375.5" fill="none" stroke="#ff3b3b" stroke-width="1.1" stroke-dasharray="4 2.6"/><rect x="187.5" y="426.5" width="66" height="64" fill="#fff" stroke="#222" stroke-width="1"/><rect x="187.5" y="426" width="33" height="2.5" fill="#7a7a7a"/><rect x="187.5" y="489" width="66" height="2.2" fill="#7a7a7a"/><rect x="190.5" y="428.5" width="28" height="59.5" rx="1" fill="#fff" stroke="#3a3a3a" stroke-width="1.3"/><rect x="220.5" y="427.5" width="32" height="62" fill="#fff" stroke="#111" stroke-width="1"/><path d="M253.3 426V491" stroke="#1a1a1a" stroke-width="1.6"/><rect x="222.5" y="430.5" width="27" height="56" fill="none" stroke="#111" stroke-width="1"/><path d="M222.5 430.5L249.5 458.5L222.5 486.5" fill="none" stroke="#ff3b3b" stroke-width="1.1" stroke-dasharray="4 2.6"/><rect x="466.5" y="426.5" width="66" height="64" fill="#fff" stroke="#222" stroke-width="1"/><rect x="466.5" y="426" width="33" height="2.5" fill="#7a7a7a"/><rect x="466.5" y="489" width="66" height="2.2" fill="#7a7a7a"/><rect x="469.5" y="428.5" width="28" height="59.5" rx="1" fill="#fff" stroke="#3a3a3a" stroke-width="1.3"/><rect x="499.5" y="427.5" width="32" height="62" fill="#fff" stroke="#111" stroke-width="1"/><path d="M532.3 426V491" stroke="#1a1a1a" stroke-width="1.6"/><rect x="501.5" y="430.5" width="27" height="56" fill="none" stroke="#111" stroke-width="1"/><path d="M501.5 430.5L528.5 458.5L501.5 486.5" fill="none" stroke="#ff3b3b" stroke-width="1.1" stroke-dasharray="4 2.6"/><rect x="334.3" y="425.4" width="44.69999999999999" height="89.70000000000005" fill="#fff" stroke="#6a6a6a" stroke-width="1.9"/><rect x="336.3" y="427.59999999999997" width="40.69999999999999" height="87.60000000000005" fill="none" stroke="#b0b0b0" stroke-width="0.9"/><rect x="342.3" y="433.8" width="13.5" height="45.4" fill="none" stroke="#111" stroke-width="1.5"/><rect x="342.3" y="484.3" width="13.5" height="26" fill="none" stroke="#111" stroke-width="1.5"/><rect x="358.5" y="433.8" width="13.5" height="45.4" fill="none" stroke="#111" stroke-width="1.5"/><rect x="358.5" y="484.3" width="13.5" height="26" fill="none" stroke="#111" stroke-width="1.5"/><rect x="334.3" y="515.3" width="44.69999999999999" height="3.2" fill="#fff" stroke="#2a2a2a" stroke-width="1.1"/></g></svg><div style="position:absolute;left:711px;top:125px;width:16px;height:421px;background:#e8e8e8"></div><div style="position:absolute;left:1px;top:546px;width:710px;height:14px;background:#e8e8e8"></div><div style="position:absolute;left:283px;top:546px;width:18px;height:14px;background:#cdcdcd"></div><div style="position:absolute;left:711px;top:370px;width:15px;height:15px;background:#cdcdcd"></div><div style="position:absolute;left:728px;top:127px;width:293px;height:458px;border:2px solid #cfcfcf;box-sizing:border-box;background:#f0f0f0"></div><div style="position:absolute;left:731px;top:158px;width:288px;height:81px;border:2px solid #c4c4c4;border-right-width:1px;box-sizing:border-box;background:#f0f0f0"></div><div style="position:absolute;left:731px;top:238px;width:289px;height:345px;background:#ffffff"></div><div style="position:absolute;left:2px;top:589px;width:1019px;height:67px;border:2px solid #cfcfcf;box-sizing:border-box;background:#f0f0f0"></div><div style="position:absolute;left:1px;top:657px;width:1022px;height:1px;background:#cdcdcd"></div><svg width="1024" height="676" viewBox="0 0 1024 676" style="position:absolute;left:0;top:0"><rect x="6" y="7" width="14" height="13.5" fill="#2e2860"/><path d="M8.6 13.2L13 9.2L17.4 13.2V18.2H8.6Z" fill="#fff"/><path d="M10.8 14.2h4.4M10.8 16.2h4.4M13 14v3" stroke="#2e2860" stroke-width="0.9"/><path d="M31 8H38L40.5 10.5V19.4H31Z" fill="#f4f8fc" stroke="#dfe7ef" stroke-width="0.6"/><path d="M38 8V10.5H40.5" fill="#b8d4ee"/><path d="M53 9H57.5L58.5 10.2H65V18.6H53Z" fill="#e8a820"/><path d="M54.6 12.4H67L65 18.6H53Z" fill="#fbd35a"/><rect x="77.6" y="8" width="11.8" height="12" rx="0.8" fill="#a8c8ea"/><rect x="79.6" y="8.6" width="7.8" height="5.2" fill="#f0f4f8"/><path d="M80.4 10.3h6.2M80.4 12.1h6.2" stroke="#8aa6c4" stroke-width="0.7"/><rect x="80" y="15.6" width="7.4" height="4.4" fill="#202428"/><rect x="96.9" y="7" width="1" height="13.5" fill="#8fb8e4"/><rect x="125.5" y="7" width="1" height="13.5" fill="#8fb8e4"/><rect x="201.1" y="7" width="1" height="13.5" fill="#8fb8e4"/><path d="M107.5 8.5L114 7.2L116 11.5L109.5 12.8Z" fill="#fff"/><path d="M105 12.5H118.6L119 17.8L112 19.6L104.6 17.8Z" fill="#d8d8d8"/><path d="M104.8 12.5H118.6L111.5 14.2Z" fill="#f4f4f4"/><path d="M106 17.6L112 19.4L118.4 17.6" stroke="#555" stroke-width="1" fill="none"/><path d="M135.6 7L141 15.8M144.4 7L139 15.8" stroke="#b8bec8" stroke-width="1"/><circle cx="137" cy="17.6" r="1.8" fill="none" stroke="#a8aeb8" stroke-width="1"/><circle cx="143" cy="17.6" r="1.8" fill="none" stroke="#a8aeb8" stroke-width="1"/><rect x="158" y="10.4" width="7.4" height="9" fill="#d6d6d6" stroke="#bdbdbd" stroke-width="0.6"/><rect x="162.6" y="8" width="7.4" height="9" fill="#e2e2e2" stroke="#bdbdbd" stroke-width="0.6"/><rect x="181.2" y="8.2" width="10.4" height="11.6" rx="1" fill="#f0b020" stroke="#c47c10" stroke-width="0.6"/><rect x="183.6" y="7" width="5.6" height="2.4" fill="#6088b8"/><path d="M187 12.4H193.4L195.2 14.2V20H187Z" fill="#fff" stroke="#8ab0d8" stroke-width="0.6"/><path d="M188.6 15.8h4.6M188.6 17.6h4.6" stroke="#5a86c0" stroke-width="0.8"/><path d="M214 10.2C219 9 222.6 12.4 221.6 16.4C221 18.4 219.6 19.6 218.4 20" fill="none" stroke="#1a4e8c" stroke-width="2.2"/><path d="M211 11.2L215.6 7.4L215.8 14Z" fill="#7fb0e8"/><path d="M242.6 10.4C237.6 9.4 234.4 12.6 235.4 16.4C236 18.4 237.2 19.6 238.2 20" fill="none" stroke="#9aa4ae" stroke-width="2.4"/><path d="M246 11.2L241.2 7.2L241 14.2Z" fill="#aab4be"/><rect x="875.6" y="9.6" width="10.8" height="9" fill="none" stroke="#c8dcf0" stroke-width="1"/><path d="M875.6 12.1H886.4M881 17.8V13.6M879 15.4L881 13.4L883 15.4" fill="none" stroke="#c8dcf0" stroke-width="1"/><path d="M917 14.8H926" stroke="#c8dcf0" stroke-width="1"/><rect x="958.5" y="9.5" width="8.5" height="8.6" fill="none" stroke="#d8e6f4" stroke-width="1"/><path d="M999.2 9.3L1008.2 18.3M1008.2 9.3L999.2 18.3" stroke="#d8e6f4" stroke-width="1"/><path d="M18.5 32.5H29.8V42.2H18.5Z" fill="#fff" stroke="#203040" stroke-width="0.6"/><path d="M22.4 32.5V42.2" stroke="#203040" stroke-width="0.8"/><path d="M24.4 34.5h3.4M24.4 36.5h3.4M24.4 38.5h3.4M24.4 40.3h3.4" stroke="#8a8a8a" stroke-width="0.8"/><path d="M33.2 37.2H37.6L35.4 39.6Z" fill="#fff"/><rect x="846.8" y="28" width="48" height="16.6" fill="#0b5aa6"/><rect x="752.6" y="30.4" width="11.6" height="11.4" fill="none" stroke="#5a5a6a" stroke-width="1.2"/><path d="M760.0 37.6L764.8 42.4" stroke="#6a6a6a" stroke-width="2"/><circle cx="757.4" cy="35.0" r="4" fill="#7cc4f4" stroke="#d0e8fa" stroke-width="1"/><circle cx="756.4" cy="34.0" r="1.5" fill="#e8f6ff"/><path d="M784.4 37.6L789.1999999999999 42.4" stroke="#6a6a6a" stroke-width="2"/><circle cx="781.8" cy="35.0" r="4" fill="#7cc4f4" stroke="#d0e8fa" stroke-width="1"/><circle cx="780.8" cy="34.0" r="1.5" fill="#e8f6ff"/><rect x="779.6" y="33" width="4" height="4" fill="none" stroke="#5a5a6a" stroke-width="0.9"/><path d="M808.4 37.6L813.1999999999999 42.4" stroke="#6a6a6a" stroke-width="2"/><circle cx="805.8" cy="35.0" r="4" fill="#7cc4f4" stroke="#d0e8fa" stroke-width="1"/><circle cx="804.8" cy="34.0" r="1.5" fill="#e8f6ff"/><rect x="803.6" y="33" width="4" height="3" fill="none" stroke="#5a4a3a" stroke-width="0.9"/><g stroke="#9a8a78" stroke-width="0.9" fill="none"><rect x="829" y="31" width="12" height="11.8"/><path d="M832 31V42.8M835 31V42.8M838 31V42.8M829 34H841M829 37H841M829 40H841"/></g><path d="M852 43L866 29M856 43L866 33" stroke="#6a7c8c" stroke-width="0.9"/><circle cx="859" cy="36.4" r="2.4" fill="none" stroke="#3a3a3a" stroke-width="1.2"/><path d="M878 30V42.6H890" stroke="#1a1a1a" stroke-width="1.2" fill="none"/><path d="M880 41L886 35" stroke="#6a7c8c" stroke-width="1"/><circle cx="887.6" cy="33" r="1.6" fill="none" stroke="#1a1a1a" stroke-width="1"/><path d="M900 29.4V43.6H913.6" stroke="#e8eef4" stroke-width="0.9" stroke-dasharray="1 1" fill="none"/><path d="M905.8 35V33a2.6 2.6 0 0 1 5.2 0V35" fill="none" stroke="#c8a040" stroke-width="1.1"/><rect x="904.4" y="35" width="8.2" height="5.6" fill="#f0b830"/><circle cx="935" cy="36.6" r="6.6" fill="#3a9a3a" stroke="#b8d8b8" stroke-width="0.8"/><path d="M931.5 35.2a3.8 3.8 0 0 1 6.6-1.6M938.5 38a3.8 3.8 0 0 1-6.6 1.6" fill="none" stroke="#e8f4e8" stroke-width="1.4"/><circle cx="963.2" cy="36.6" r="6.4" fill="#3a7cc8" stroke="#c8d8e8" stroke-width="1"/><text x="963.2" y="40.6" font-family="Liberation Sans" font-weight="bold" font-size="10" fill="#fff" text-anchor="middle">?</text><circle cx="987" cy="36.6" r="6.4" fill="#3a7cc8" stroke="#c8d8e8" stroke-width="1"/><text x="987" y="40.8" font-family="Liberation Serif" font-weight="bold" font-size="10" fill="#fff" text-anchor="middle">i</text><circle cx="1011.5" cy="36.6" r="6.6" fill="#d81c1c" stroke="#c8c8c8" stroke-width="1"/><path d="M1009 34.1L1014 39.1M1014 34.1L1009 39.1" stroke="#fff" stroke-width="1.8"/><path d="M11.4 52.1L22.6 63.3" stroke="#111" stroke-width="1.3"/><rect x="10.38" y="51.08" width="2.04" height="2.04" fill="#8080c0" stroke="#2a2a8a" stroke-width="0.7"/><rect x="21.580000000000002" y="62.279999999999994" width="2.04" height="2.04" fill="#8080c0" stroke="#2a2a8a" stroke-width="0.7"/><path d="M11.4 72.3Q19.4 72.8 21.6 82.4" fill="none" stroke="#111" stroke-width="1.3"/><rect x="10.38" y="71.28" width="2.04" height="2.04" fill="#8080c0" stroke="#2a2a8a" stroke-width="0.7"/><rect x="20.580000000000002" y="81.38000000000001" width="2.04" height="2.04" fill="#8080c0" stroke="#2a2a8a" stroke-width="0.7"/><rect x="17.6" y="74.2" width="2.4" height="2.4" fill="#e02020"/><rect x="11" y="81" width="2" height="2" fill="#2a2a8a"/><circle cx="16.8" cy="95.6" r="6.4" fill="none" stroke="#111" stroke-width="1.4"/><rect x="16" y="94.8" width="1.6" height="1.6" fill="#2a2a8a"/><path d="M67 52L76.4 55.8L69.6 59.4L78.4 62.8" fill="none" stroke="#111" stroke-width="1.2"/><rect x="66.065" y="51.065" width="1.87" height="1.87" fill="#8080c0" stroke="#2a2a8a" stroke-width="0.7"/><rect x="75.465" y="54.864999999999995" width="1.87" height="1.87" fill="#8080c0" stroke="#2a2a8a" stroke-width="0.7"/><rect x="68.66499999999999" y="58.464999999999996" width="1.87" height="1.87" fill="#8080c0" stroke="#2a2a8a" stroke-width="0.7"/><rect x="77.465" y="61.864999999999995" width="1.87" height="1.87" fill="#8080c0" stroke="#2a2a8a" stroke-width="0.7"/><ellipse cx="72.3" cy="77.4" rx="5.7" ry="4.3" fill="none" stroke="#111" stroke-width="1.4"/><rect x="71.4" y="76.5" width="1.8" height="1.8" fill="#2a2a8a"/><rect x="71.45" y="72.25" width="1.7" height="1.7" fill="#8080c0" stroke="#2a2a8a" stroke-width="0.7"/><rect x="77.15" y="76.55000000000001" width="1.7" height="1.7" fill="#8080c0" stroke="#2a2a8a" stroke-width="0.7"/><path d="M72.6 89.6L78.2 92.8V99.2L72.6 102.4L67 99.2V92.8Z" fill="none" stroke="#111" stroke-width="1.3"/><rect x="71.8" y="95.2" width="1.5" height="1.5" fill="#111"/><rect x="66.15" y="91.75" width="1.7" height="1.7" fill="#8080c0" stroke="#2a2a8a" stroke-width="0.7"/><path d="M138.6 52.4H151.4" stroke="#111" stroke-width="1.2"/><rect x="137.665" y="51.464999999999996" width="1.87" height="1.87" fill="#8080c0" stroke="#2a2a8a" stroke-width="0.7"/><rect x="150.465" y="51.464999999999996" width="1.87" height="1.87" fill="#8080c0" stroke="#2a2a8a" stroke-width="0.7"/><path d="M139 56H151M139 59.8H151M139 63.6H151" stroke="#1a1a1a" stroke-width="1.1"/><rect x="139" y="70.9" width="12.3" height="11.6" fill="none" stroke="#111" stroke-width="1.3"/><rect x="138.065" y="69.965" width="1.87" height="1.87" fill="#8080c0" stroke="#2a2a8a" stroke-width="0.7"/><rect x="150.365" y="69.965" width="1.87" height="1.87" fill="#8080c0" stroke="#2a2a8a" stroke-width="0.7"/><rect x="138.065" y="81.565" width="1.87" height="1.87" fill="#8080c0" stroke="#2a2a8a" stroke-width="0.7"/><rect x="150.365" y="81.565" width="1.87" height="1.87" fill="#8080c0" stroke="#2a2a8a" stroke-width="0.7"/><path d="M140.4 92.2Q142 89.6 144.6 91Q147.4 89.6 149.4 92Q151.6 93.6 150.6 96.4Q151.6 99.4 148.4 99.6Q146 101 143.6 99.4Q140.6 100 140.8 97.2Q139 95 140.4 92.2Z" fill="none" stroke="#111" stroke-width="1.4"/><path d="M224.8 51.2V64.6M232.6 51.2V64.6" stroke="#3a3a3a" stroke-width="1.4"/><path d="M226.4 56.2H229.4V54.2L232.4 57.8L229.4 61.4V59.4H226.4Z" fill="#3cb83c"/><path d="M224.8 70.2L228.8 79H220.8Z" fill="#38a838"/><rect x="229" y="73" width="6.2" height="6.6" fill="#e03030"/><circle cx="228.2" cy="79.6" r="3.9" fill="#3a64b0"/><circle cx="227.2" cy="78.6" r="1.5" fill="#a8c8f0"/><rect x="221.2" y="88.8" width="13.2" height="12.4" fill="#fafafa" stroke="#9a9a9a" stroke-width="0.9"/><rect x="223.2" y="90.8" width="9.2" height="8.4" fill="#7ab8e8"/><path d="M223.2 99.2L226.4 94.6L229 97.6L230.4 96.2L232.4 99.2Z" fill="#6a5a4a"/><rect x="229.8" y="91.4" width="2" height="2" fill="#f0c040"/><g fill="none" stroke="#111" stroke-width="1.4"><path d="M280.8 56.6H285.8V51.6M283.2 51.6V54.2H280.8"/><path d="M287.4 56.6H292.4V51.6M289.79999999999995 51.6V54.2H287.4"/><path d="M280.8 63H285.8V58M283.2 58V60.6H280.8"/><path d="M287.4 63H292.4V58M289.79999999999995 58V60.6H287.4"/></g><rect x="279.4" y="62.6" width="1.8" height="1.8" fill="#e02020"/><rect x="280.4" y="71.2" width="11.6" height="11.4" fill="#fff" stroke="#111" stroke-width="1.3"/><clipPath id="hc"><rect x="281.1" y="71.9" width="10.2" height="10"/></clipPath><g clip-path="url(#hc)" stroke="#f04848" stroke-width="1.3"><path d="M279 76L284 71M279 79.5L287.5 71M279 83L291 71M282.5 83L292 73.5M286 83L292 77M289.5 83L292 80.5"/></g><rect x="282.4" y="92" width="7.6" height="7.4" rx="2" fill="none" stroke="#e02020" stroke-width="1.8"/><path d="M280.2 89.8L292 101.6M292 89.8L280.2 101.6" stroke="#1a3ad8" stroke-width="1.2"/><path d="M342.4 56.8H356.2" stroke="#6a6a6a" stroke-width="1.1"/><path d="M343.6 55L346.6 58.6M346.6 55L343.6 58.6M351.6 55L354.6 58.6M354.6 55L351.6 58.6" stroke="#f02020" stroke-width="1.1"/><rect x="343" y="70.6" width="12.8" height="12.8" fill="#fff" stroke="#f02020" stroke-width="1.3"/><path d="M343.4 71L355.4 83M355.4 71L343.4 83" stroke="#f02020" stroke-width="1.1"/><rect x="343" y="89.4" width="12.8" height="12.8" fill="#fff" stroke="#f02020" stroke-width="1.3"/><path d="M347.4 93A4.3 4.3 0 1 1 346.2 99.2" fill="none" stroke="#f02020" stroke-width="2.4"/><path d="M344.6 91.4L349.4 91.8L346.4 95.8Z" fill="#f02020"/><path d="M123.8 57.2H127.8L125.8 59.400000000000006Z" fill="#222"/><path d="M51.4 76.2H55.4L53.4 78.4Z" fill="#222"/><path d="M198.1 57.2H202.1L200.1 59.400000000000006Z" fill="#222"/><path d="M207 76.2H211L209 78.4Z" fill="#222"/><path d="M323.8 57.2H327.8L325.8 59.400000000000006Z" fill="#222"/><path d="M323.8 76.2H327.8L325.8 78.4Z" fill="#222"/><path d="M385 96.6H389L387 98.8Z" fill="#222"/><path d="M616.8 96.6H620.8L618.8 98.8Z" fill="#222"/><path d="M954.2 75.9H958.2L956.2 78.10000000000001Z" fill="#222"/><path d="M954.2 95H958.2L956.2 97.2Z" fill="#222"/><rect x="364.9" y="50.5" width="1" height="68.0" fill="#d2d2d2"/><rect x="409.7" y="50.5" width="1" height="68.0" fill="#d2d2d2"/><rect x="595.9" y="50.5" width="1" height="68.0" fill="#d2d2d2"/><rect x="640.4" y="52" width="1" height="49.5" fill="#d2d2d2"/><rect x="969.1" y="50.5" width="1" height="68.0" fill="#d2d2d2"/><path d="M419.1 57.6H433" stroke="#111" stroke-width="1.2"/><rect x="424.8" y="56.6" width="2" height="2" fill="#2a2a8a"/><path d="M425.7 70V83.6" stroke="#111" stroke-width="1.2"/><rect x="424.7" y="75.5" width="2" height="2" fill="#2a2a8a"/><path d="M420 101.5L432 89.5" stroke="#111" stroke-width="1.2"/><rect x="422" y="97.5" width="2" height="2" fill="#2a2a8a"/><rect x="428" y="92" width="2" height="2" fill="#2a2a8a"/><path d="M490.2 52.1L502.4 63.8" stroke="#111" stroke-width="1.3"/><rect x="498.4" y="54" width="2" height="2" fill="#2a2a8a"/><rect x="492" y="60" width="2" height="2" fill="#2a2a8a"/><path d="M490 71L502.4 83.4M489.6 74.6Q493.6 73 496.4 77.2L498.6 83.6" fill="none" stroke="#111" stroke-width="1.2"/><rect x="495.75" y="76.15" width="1.7" height="1.7" fill="#8080c0" stroke="#2a2a8a" stroke-width="0.7"/><circle cx="496" cy="95.7" r="6.4" fill="none" stroke="#111" stroke-width="1.3"/><circle cx="496" cy="95.7" r="1.4" fill="#111"/><path d="M575.8 50.8V65.2M583.2 50.8V65.2" stroke="#3a3a3a" stroke-width="1.2"/><path d="M577 56.4H579.6V54.2L583 57.8L579.6 61.4V59.2H577Z" fill="#3cb83c"/><circle cx="585.6" cy="57.8" r="1.2" fill="none" stroke="#2a2a8a" stroke-width="0.9"/><path d="M574.4 72.4H587.6M576.6 70V83.6" stroke="#4a4a6a" stroke-width="1"/><path d="M579 74.8L582 73.8L587.4 79.4L584.6 82.6Z" fill="#3cb83c"/><rect x="585.6" y="71.4" width="2" height="2" fill="#2a2a8a"/><path d="M575 95.4H587.8M581.4 89V102" stroke="#111" stroke-width="1.1"/><path d="M577.2 91.2L585.6 99.6M585.6 91.2L577.2 99.6" stroke="#e02020" stroke-width="1.5"/><circle cx="585.8" cy="95.4" r="1.1" fill="#2a2a8a"/><circle cx="581.4" cy="100.6" r="1.1" fill="#2a2a8a"/><path d="M609 50.8H625.2L629.4 55V76.2Q629.4 77.2 628.4 77.2H610Q609 77.2 609 76.2Z" fill="#fbfbfb" stroke="#c4c4c4" stroke-width="0.9"/><path d="M625.2 50.8V55H629.4" fill="#e8e8e8" stroke="#c4c4c4" stroke-width="0.9"/><path d="M609.5 73.6H628.9V76.4Q628.9 76.7 628.4 76.7H610Q609.5 76.7 609.5 76.4Z" fill="#ececec"/><text x="617.9" y="71" font-family="Liberation Serif" font-weight="bold" font-size="20.5" fill="#1a1a1a" text-anchor="middle">A</text><path d="M626.6 57V71" stroke="#333" stroke-width="1"/><path d="M664.6 50.8H681.4L685.6 55V76.2Q685.6 77.2 684.6 77.2H665.6Q664.6 77.2 664.6 76.2Z" fill="#f8f8f8" stroke="#c4c4c4" stroke-width="0.9"/><path d="M681.4 50.8V55H685.6" fill="#e8e8e8" stroke="#c4c4c4" stroke-width="0.9"/><path d="M666.4 56H669.6Q671 60 671 64.4Q671 69 669.6 73H666.4" fill="none" stroke="#d4d4d4" stroke-width="1.2"/><rect x="674.3" y="60" width="9.4" height="8.8" fill="#9a9a9a" stroke="#222" stroke-width="1.3"/><path d="M675 62.4h8M675 64.4h8M675 66.4h8" stroke="#e8e8e8" stroke-width="0.9"/><path d="M712.8 52.2V63.4M725.1 52.2V63.4M712.8 52.6H725.1" stroke="#555" stroke-width="1.2" fill="none"/><path d="M717 55.4L720.4 58.8M720.4 55.4L717 58.8" stroke="#111" stroke-width="1"/><rect x="712" y="63.2" width="1.8" height="1.8" fill="#f04040"/><rect x="724.2" y="63.2" width="1.8" height="1.8" fill="#f04040"/><path d="M712.6 71.6H725.6" stroke="#111" stroke-width="1" stroke-dasharray="1.2 0.8"/><path d="M712.8 71.6V81.6M719 71.6V82.6M725.3 71.6V80.6" stroke="#111" stroke-width="1.1"/><path d="M713.4 101V93H725.4V101M719.4 93V97" stroke="#333" stroke-width="1.1" fill="none"/><text x="713.6" y="92.2" font-family="Liberation Sans" font-size="5" fill="#111">x y</text><rect x="712.6" y="100.6" width="1.8" height="1.8" fill="#f04040"/><rect x="724.6" y="100.6" width="1.8" height="1.8" fill="#f04040"/><rect x="718.6" y="96.4" width="1.6" height="1.6" fill="#f04040"/><path d="M827.8 52.2V63.6M827.8 52H839.8M840 52.6Q839.4 61 829.4 64" fill="none" stroke="#222" stroke-width="1.1"/><text x="829.6" y="61.6" font-family="Liberation Sans" font-weight="bold" font-size="8" fill="#111">A°</text><rect x="838.8" y="51.4" width="1.8" height="1.8" fill="#d03030"/><rect x="828.2" y="63" width="1.8" height="1.8" fill="#d03030"/><circle cx="834.2" cy="77.2" r="6.2" fill="none" stroke="#333" stroke-width="1"/><path d="M832.6 75.4L835.8 79M835.8 75.4L832.6 79" stroke="#222" stroke-width="0.9"/><path d="M828.2 77.2L830.6 75.8V78.6ZM840.2 77.2L837.8 75.8V78.6Z" fill="#8a3a1a"/><path d="M833 89.4L836.6 92.6M836.6 89.4L833 92.6" stroke="#222" stroke-width="1.1"/><path d="M828.4 95.4A6.2 6.2 0 0 0 841 95.4" fill="none" stroke="#333" stroke-width="1"/><path d="M834.8 94.6V101.6" stroke="#222" stroke-width="1.1"/><rect x="834" y="93.8" width="1.8" height="1.8" fill="#f03030"/><rect x="834" y="100.6" width="1.8" height="1.8" fill="#f03030"/><text x="936.6" y="56.6" font-family="Liberation Sans" font-size="6" fill="#111">x</text><path d="M938.4 62.4Q940.6 54.2 949.6 52.4" fill="none" stroke="#222" stroke-width="1"/><path d="M940.4 64.6Q942.6 57.2 950.6 55" fill="none" stroke="#c06040" stroke-width="1.1"/><path d="M950.2 52.2L947.4 50.8L947.8 53.8Z" fill="#222"/><rect x="937.4" y="61.8" width="1.6" height="1.6" fill="#222"/><path d="M939.8 70.2L938 73H941.6Z" fill="#111"/><path d="M939.8 72.6V76.6M942.4 80.6H947" stroke="#111" stroke-width="1.2"/><path d="M950.6 80.6L946.8 78.8V82.4Z" fill="#111"/><path d="M939.8 77.4L942.6 80.4L939.8 83.4L937 80.4Z" fill="#2a5ad8"/><path d="M949.6 89.6L938.8 100.4M938.6 100.6V96.4M938.6 100.6H942.8" fill="none" stroke="#111" stroke-width="1.2"/><path d="M1005.3 115.6L1009.8 111.2L1014.3 115.6L1012.4 117.5L1009.8 114.9L1007.2 117.5Z" fill="#fafafa" stroke="#7a7a7a" stroke-width="1"/></svg><svg width="1024" height="676" viewBox="0 0 1024 676" style="position:absolute;left:0;top:0"><path d="M715.6 134L718.7 130.4L721.8 134" fill="none" stroke="#606060" stroke-width="1.4"/><path d="M715.6 537.6L718.7 541.2L721.8 537.6" fill="none" stroke="#606060" stroke-width="1.4"/><rect x="711" y="125" width="16" height="421" fill="none"/><path d="M10 550.4L6.2 553.4L10 556.4" fill="none" stroke="#606060" stroke-width="1.4"/><path d="M702.2 550.4L706 553.4L702.2 556.4" fill="none" stroke="#606060" stroke-width="1.4"/><path d="M712.5 553V558.5H713.8" fill="none" stroke="#b0b0b0" stroke-width="0.8"/><path d="M988 138.6H992.6M988.8 138.6V142.6M991.8 138.6V142.6M987 142.6H993.6M990.3 142.6V145.2" fill="none" stroke="#3c3c3c" stroke-width="1"/><rect x="989.6" y="139.0" width="1.4" height="3.6" fill="#3c3c3c"/><path d="M1003 138.2L1010 145.2M1010 138.2L1003 145.2" stroke="#3c3c3c" stroke-width="1.2"/><path d="M988 600.4H992.6M988.8 600.4V604.4M991.8 600.4V604.4M987 604.4H993.6M990.3 604.4V607.0" fill="none" stroke="#3c3c3c" stroke-width="1"/><rect x="989.6" y="600.8" width="1.4" height="3.6" fill="#3c3c3c"/><path d="M1002.8 600L1010.1999999999999 607.4M1010.1999999999999 600L1002.8 607.4" stroke="#3c3c3c" stroke-width="1.2"/><rect x="745.5" y="173.5" width="273" height="64.5" fill="#ffffff" stroke="#c8c8c8" stroke-width="1"/><rect x="746" y="174" width="128.6" height="64" fill="#f0f0f0"/><path d="M746 190.5H1018" stroke="#d8d8d8" stroke-width="1"/><path d="M746 206.5H1018" stroke="#d8d8d8" stroke-width="1"/><path d="M746 222.5H1018" stroke="#d8d8d8" stroke-width="1"/><path d="M874.5 174V238" stroke="#d8d8d8" stroke-width="1"/><path d="M745.5 173.5H1018.5" stroke="#c0c0c0" stroke-width="1"/><path d="M1006 168.6L1009.4 165L1012.8 168.6Z" fill="#505050"/><rect x="1005" y="620" width="14.4" height="33.4" fill="#e6e6e6"/><path d="M1009 628.2L1012.2 624.8L1015.4 628.2" fill="none" stroke="#606060" stroke-width="1.3"/><path d="M1009 643.6L1012.2 647L1015.4 643.6" fill="none" stroke="#606060" stroke-width="1.3"/><rect x="39.6" y="658" width="70.80000000000001" height="17" fill="#ffffff"/><path d="M39.1 658V675M110.9 658V675M124.1 658V675" stroke="#c8c8c8" stroke-width="1"/><path d="M114.5 664.6H120.5L117.5 667.8Z" fill="#606060"/><rect x="171.6" y="658" width="71.0" height="17" fill="#ffffff"/><path d="M171.1 658V675M243.1 658V675M256.5 658V675" stroke="#c8c8c8" stroke-width="1"/><path d="M246.8 664.6H252.8L249.8 667.8Z" fill="#606060"/><rect x="298.2" y="658" width="70.80000000000001" height="17" fill="#ffffff"/><path d="M297.7 658V675M369.5 658V675M382.9 658V675" stroke="#c8c8c8" stroke-width="1"/><path d="M373.2 664.6H379.2L376.2 667.8Z" fill="#606060"/><path d="M496.4 658V675" stroke="#c8c8c8" stroke-width="1"/><path d="M560.5 658V675" stroke="#c8c8c8" stroke-width="1"/><path d="M613.6 658V675" stroke="#c8c8c8" stroke-width="1"/><rect x="1019.5" y="664.5" width="1.2" height="1.2" fill="#707070"/><rect x="1017.5" y="666.5" width="1.2" height="1.2" fill="#707070"/><rect x="1019.5" y="666.5" width="1.2" height="1.2" fill="#707070"/><rect x="1015.5" y="668.5" width="1.2" height="1.2" fill="#707070"/><rect x="1017.5" y="668.5" width="1.2" height="1.2" fill="#707070"/><rect x="1019.5" y="668.5" width="1.2" height="1.2" fill="#707070"/><rect x="1013.5" y="670.5" width="1.2" height="1.2" fill="#707070"/><rect x="1015.5" y="670.5" width="1.2" height="1.2" fill="#707070"/><rect x="1017.5" y="670.5" width="1.2" height="1.2" fill="#707070"/><rect x="1019.5" y="670.5" width="1.2" height="1.2" fill="#707070"/></svg><div style="position:absolute;left:0px;top:0px;width:1px;height:676px;background:#0073c7"></div><div style="position:absolute;left:1023px;top:0px;width:1px;height:676px;background:#0073c7"></div><div style="position:absolute;left:0px;top:675px;width:1024px;height:1px;background:#0073c7"></div><div style="position:absolute;left:430px;top:560px;width:59px;height:17px;border:1px solid #cfcfcf;border-top:none;box-sizing:border-box;background:#f0f0f0"></div><div class="t" style="left:474.70px;top:7.70px;font-size:10px;line-height:12px;color:#ffffff;letter-spacing:0.000px;font-weight:normal;transform:scaleX(0.8956);transform-origin:0 0;">PlansXpress 2019</div><div class="t" style="left:67.70px;top:31.70px;font-size:10px;line-height:12px;color:#ffffff;letter-spacing:0.000px;font-weight:normal;transform:scaleX(0.9518);transform-origin:0 0;">Architectural</div><div class="t" style="left:253.70px;top:31.70px;font-size:10px;line-height:12px;color:#ffffff;letter-spacing:0.000px;font-weight:normal;transform:scaleX(0.9006);transform-origin:0 0;">Non-Estimated Symbols</div><div class="t" style="left:371.70px;top:31.70px;font-size:10px;line-height:12px;color:#ffffff;letter-spacing:0.000px;font-weight:normal;transform:scaleX(0.9176);transform-origin:0 0;">Sections</div><div class="t" style="left:428.20px;top:31.70px;font-size:10px;line-height:12px;color:#ffffff;letter-spacing:0.000px;font-weight:normal;transform:scaleX(0.9127);transform-origin:0 0;">Modify &amp; Selection</div><div class="t" style="left:525.70px;top:31.70px;font-size:10px;line-height:12px;color:#ffffff;letter-spacing:0.000px;font-weight:normal;transform:scaleX(0.8968);transform-origin:0 0;">Views &amp; 3D</div><div class="t" style="left:592.70px;top:31.70px;font-size:10px;line-height:12px;color:#ffffff;letter-spacing:0.000px;font-weight:normal;transform:scaleX(0.9145);transform-origin:0 0;">Scan &amp; Trace</div><div class="t" style="left:669.20px;top:31.70px;font-size:10px;line-height:12px;color:#ffffff;letter-spacing:0.000px;font-weight:normal;transform:scaleX(0.9325);transform-origin:0 0;">Settings</div><div class="t" style="left:141.70px;top:31.70px;font-size:10px;line-height:12px;color:#404040;letter-spacing:0.000px;font-weight:normal;transform:scaleX(0.9452);transform-origin:0 0;">Drawing &amp; Annotation</div><div class="t" style="left:27.70px;top:52.70px;font-size:10px;line-height:12px;color:#464646;letter-spacing:0.000px;font-weight:normal;transform:scaleX(0.8992);transform-origin:0 0;">Line</div><div class="t" style="left:27.70px;top:71.69px;font-size:10px;line-height:12px;color:#464646;letter-spacing:0.000px;font-weight:normal;transform:scaleX(0.9667);transform-origin:0 0;">Arc</div><div class="t" style="left:27.70px;top:90.69px;font-size:10px;line-height:12px;color:#464646;letter-spacing:0.000px;font-weight:normal;transform:scaleX(0.8998);transform-origin:0 0;">Circle</div><div class="t" style="left:83.00px;top:52.70px;font-size:10px;line-height:12px;color:#464646;letter-spacing:0.000px;font-weight:normal;transform:scaleX(0.8935);transform-origin:0 0;">Polyline</div><div class="t" style="left:83.00px;top:71.69px;font-size:10px;line-height:12px;color:#464646;letter-spacing:0.000px;font-weight:normal;transform:scaleX(0.8687);transform-origin:0 0;">Ellipse</div><div class="t" style="left:83.00px;top:90.69px;font-size:10px;line-height:12px;color:#464646;letter-spacing:0.000px;font-weight:normal;transform:scaleX(0.9186);transform-origin:0 0;">Polygon</div><div class="t" style="left:155.40px;top:52.70px;font-size:10px;line-height:12px;color:#464646;letter-spacing:0.000px;font-weight:normal;transform:scaleX(0.8968);transform-origin:0 0;">Multiline</div><div class="t" style="left:155.40px;top:71.69px;font-size:10px;line-height:12px;color:#464646;letter-spacing:0.000px;font-weight:normal;transform:scaleX(0.9282);transform-origin:0 0;">Rectangle</div><div class="t" style="left:155.40px;top:90.69px;font-size:10px;line-height:12px;color:#464646;letter-spacing:0.000px;font-weight:normal;transform:scaleX(0.9105);transform-origin:0 0;">Cloud</div><div class="t" style="left:238.50px;top:52.70px;font-size:10px;line-height:12px;color:#464646;letter-spacing:0.000px;font-weight:normal;transform:scaleX(1.0264);transform-origin:0 0;">Offset</div><div class="t" style="left:238.50px;top:71.69px;font-size:10px;line-height:12px;color:#464646;letter-spacing:0.000px;font-weight:normal;transform:scaleX(0.8963);transform-origin:0 0;">Symbol</div><div class="t" style="left:238.50px;top:90.69px;font-size:10px;line-height:12px;color:#464646;letter-spacing:0.000px;font-weight:normal;transform:scaleX(0.9426);transform-origin:0 0;">Image</div><div class="t" style="left:296.50px;top:52.70px;font-size:10px;line-height:12px;color:#464646;letter-spacing:0.000px;font-weight:normal;transform:scaleX(0.9788);transform-origin:0 0;">Array</div><div class="t" style="left:296.50px;top:71.69px;font-size:10px;line-height:12px;color:#464646;letter-spacing:0.000px;font-weight:normal;transform:scaleX(0.9378);transform-origin:0 0;">Hatch</div><div class="t" style="left:296.50px;top:90.69px;font-size:10px;line-height:12px;color:#464646;letter-spacing:0.000px;font-weight:normal;transform:scaleX(0.9343);transform-origin:0 0;">Point</div><div class="t" style="left:436.50px;top:52.70px;font-size:10px;line-height:12px;color:#464646;letter-spacing:0.000px;font-weight:normal;transform:scaleX(0.9260);transform-origin:0 0;">Horizontal</div><div class="t" style="left:436.50px;top:71.69px;font-size:10px;line-height:12px;color:#464646;letter-spacing:0.000px;font-weight:normal;transform:scaleX(0.9452);transform-origin:0 0;">Vertical</div><div class="t" style="left:436.50px;top:90.69px;font-size:10px;line-height:12px;color:#464646;letter-spacing:0.000px;font-weight:normal;transform:scaleX(0.9226);transform-origin:0 0;">Angular</div><div class="t" style="left:506.20px;top:52.70px;font-size:10px;line-height:12px;color:#464646;letter-spacing:0.000px;font-weight:normal;transform:scaleX(0.9122);transform-origin:0 0;">Perpendicular</div><div class="t" style="left:506.20px;top:71.69px;font-size:10px;line-height:12px;color:#464646;letter-spacing:0.000px;font-weight:normal;transform:scaleX(0.9917);transform-origin:0 0;">Tangent</div><div class="t" style="left:506.20px;top:90.69px;font-size:10px;line-height:12px;color:#464646;letter-spacing:0.000px;font-weight:normal;transform:scaleX(0.9172);transform-origin:0 0;">Circular</div><div class="t" style="left:729.70px;top:52.70px;font-size:10px;line-height:12px;color:#464646;letter-spacing:0.000px;font-weight:normal;transform:scaleX(0.8853);transform-origin:0 0;">Linear Dimension</div><div class="t" style="left:729.30px;top:71.69px;font-size:10px;line-height:12px;color:#464646;letter-spacing:0.000px;font-weight:normal;transform:scaleX(0.8824);transform-origin:0 0;">Chain Dimension</div><div class="t" style="left:729.30px;top:90.69px;font-size:10px;line-height:12px;color:#464646;letter-spacing:0.000px;font-weight:normal;transform:scaleX(0.8903);transform-origin:0 0;">Multi-Point Dimension</div><div class="t" style="left:844.90px;top:52.70px;font-size:10px;line-height:12px;color:#464646;letter-spacing:0.000px;font-weight:normal;transform:scaleX(0.8959);transform-origin:0 0;">Angular Dimension</div><div class="t" style="left:844.90px;top:71.69px;font-size:10px;line-height:12px;color:#464646;letter-spacing:0.000px;font-weight:normal;transform:scaleX(0.8930);transform-origin:0 0;">Diameter Dimension</div><div class="t" style="left:844.90px;top:90.69px;font-size:10px;line-height:12px;color:#464646;letter-spacing:0.000px;font-weight:normal;transform:scaleX(0.8753);transform-origin:0 0;">Radial Dimension</div><div class="t" style="left:374.10px;top:82.69px;font-size:10px;line-height:12px;color:#464646;letter-spacing:0.000px;font-weight:normal;transform:scaleX(1.0354);transform-origin:0 0;">Insert</div><div class="t" style="left:608.70px;top:82.69px;font-size:10px;line-height:12px;color:#464646;letter-spacing:0.000px;font-weight:normal;transform:scaleX(1.1012);transform-origin:0 0;">Text</div><div class="t" style="left:649.70px;top:82.69px;font-size:10px;line-height:12px;color:#464646;letter-spacing:0.000px;font-weight:normal;transform:scaleX(0.9065);transform-origin:0 0;">Specification</div><div class="t" style="left:662.50px;top:92.69px;font-size:10px;line-height:12px;color:#464646;letter-spacing:0.000px;font-weight:normal;transform:scaleX(0.9646);transform-origin:0 0;">Notes</div><div class="t" style="left:171.70px;top:110.69px;font-size:10px;line-height:12px;color:#464646;letter-spacing:0.000px;font-weight:normal;transform:scaleX(0.9382);transform-origin:0 0;">Draw</div><div class="t" style="left:464.70px;top:110.69px;font-size:10px;line-height:12px;color:#464646;letter-spacing:0.000px;font-weight:normal;transform:scaleX(0.9200);transform-origin:0 0;">Construction Lines</div><div class="t" style="left:759.70px;top:110.69px;font-size:10px;line-height:12px;color:#464646;letter-spacing:0.000px;font-weight:normal;transform:scaleX(0.9492);transform-origin:0 0;">Annotation</div><div class="t" style="left:739.70px;top:135.03px;font-size:12px;line-height:14px;color:#464646;letter-spacing:0.000px;font-weight:normal;transform:scaleX(0.9696);transform-origin:0 0;">Properties Explorer</div><div class="t" style="left:747.90px;top:160.69px;font-size:10px;line-height:12px;color:#464646;letter-spacing:0.000px;font-weight:bold;transform:scaleX(1.0464);transform-origin:0 0;">Current</div><div class="t" style="left:760.50px;top:176.86px;font-size:9.5px;line-height:12px;color:#464646;letter-spacing:0.000px;font-weight:normal;transform:scaleX(0.9357);transform-origin:0 0;">Colour</div><div class="t" style="left:878.90px;top:176.86px;font-size:9.5px;line-height:12px;color:#2a2a2a;letter-spacing:0.000px;font-weight:normal;transform:scaleX(1.0225);transform-origin:0 0;">Layer</div><div class="t" style="left:760.50px;top:192.86px;font-size:9.5px;line-height:12px;color:#464646;letter-spacing:0.000px;font-weight:normal;transform:scaleX(0.9552);transform-origin:0 0;">Layer</div><div class="t" style="left:878.90px;top:192.69px;font-size:10px;line-height:12px;color:#333333;letter-spacing:0.000px;font-weight:bold;transform:scaleX(1.0016);transform-origin:0 0;">Wall Elevations</div><div class="t" style="left:760.50px;top:208.86px;font-size:9.5px;line-height:12px;color:#464646;letter-spacing:0.000px;font-weight:normal;transform:scaleX(0.9640);transform-origin:0 0;">Level</div><div class="t" style="left:878.90px;top:208.69px;font-size:10px;line-height:12px;color:#1f2f52;letter-spacing:0.000px;font-weight:bold;transform:scaleX(1.0053);transform-origin:0 0;">Level 1</div><div class="t" style="left:760.50px;top:224.86px;font-size:9.5px;line-height:12px;color:#464646;letter-spacing:0.000px;font-weight:normal;transform:scaleX(0.9600);transform-origin:0 0;">Linestyle</div><div class="t" style="left:878.90px;top:224.86px;font-size:9.5px;line-height:12px;color:#111111;letter-spacing:0.000px;font-weight:normal;transform:scaleX(1.0225);transform-origin:0 0;">Layer</div><div class="t" style="left:10.50px;top:561.86px;font-size:9.5px;line-height:12px;color:#333333;letter-spacing:0.000px;font-weight:normal;transform:scaleX(0.9782);transform-origin:0 0;">Complete Drawing 2 Storey House with apex roof and side extension 6.pxd</div><div class="t" style="left:337.30px;top:561.86px;font-size:9.5px;line-height:12px;color:#333333;letter-spacing:0.000px;font-weight:normal;transform:scaleX(0.9988);transform-origin:0 0;">Front Extension.pxd</div><div class="t" style="left:439.70px;top:561.86px;font-size:9.5px;line-height:12px;color:#333333;letter-spacing:0.000px;font-weight:normal;transform:scaleX(0.9865);transform-origin:0 0;">Drawing5</div><div class="t" style="left:13.50px;top:598.03px;font-size:12px;line-height:14px;color:#464646;letter-spacing:0.000px;font-weight:normal;transform:scaleX(1.0002);transform-origin:0 0;">Command Window</div><div class="t" style="left:6.00px;top:615.86px;font-size:9.5px;line-height:12px;color:#9a9a9a;letter-spacing:0.000px;font-weight:normal;transform:scaleX(0.9685);transform-origin:0 0;clip-path:inset(4.6px 0 0 0)">Give Hatch Point Inside Boundary :</div><div class="t" style="left:6.00px;top:629.86px;font-size:9.5px;line-height:12px;color:#9a9a9a;letter-spacing:0.000px;font-weight:normal;transform:scaleX(0.9640);transform-origin:0 0;">Give Hatch Origin Point :  (Intelli-Snap Found)</div><div class="t" style="left:6.00px;top:642.86px;font-size:9.5px;line-height:12px;color:#111111;letter-spacing:0.000px;font-weight:normal;transform:scaleX(0.9630);transform-origin:0 0;">Select Command or Item(s) to Modify, Click &amp; Drag for Multiple Selection</div><div class="t" style="left:5.20px;top:660.86px;font-size:9.5px;line-height:12px;color:#3a3a3a;letter-spacing:0.000px;font-weight:normal;transform:scaleX(0.9846);transform-origin:0 0;">Layer</div><div class="t" style="left:42.80px;top:660.86px;font-size:9.5px;line-height:12px;color:#333333;letter-spacing:0.000px;font-weight:normal;transform:scaleX(0.9598);transform-origin:0 0;">Wall Elevations</div><div class="t" style="left:134.10px;top:660.86px;font-size:9.5px;line-height:12px;color:#3a3a3a;letter-spacing:0.000px;font-weight:normal;transform:scaleX(0.9571);transform-origin:0 0;">Colour</div><div class="t" style="left:175.90px;top:660.86px;font-size:9.5px;line-height:12px;color:#111111;letter-spacing:0.000px;font-weight:normal;transform:scaleX(1.0225);transform-origin:0 0;">Layer</div><div class="t" style="left:266.50px;top:660.86px;font-size:9.5px;line-height:12px;color:#3a3a3a;letter-spacing:0.000px;font-weight:normal;transform:scaleX(0.9941);transform-origin:0 0;">Style</div><div class="t" style="left:302.20px;top:660.86px;font-size:9.5px;line-height:12px;color:#111111;letter-spacing:0.000px;font-weight:normal;transform:scaleX(1.0267);transform-origin:0 0;">Layer</div><div class="t" style="left:393.00px;top:660.86px;font-size:9.5px;line-height:12px;color:#3a3a3a;letter-spacing:0.000px;font-weight:normal;transform:scaleX(0.9790);transform-origin:0 0;">Size: ISO A1 (841x594)</div><div class="t" style="left:502.40px;top:660.86px;font-size:9.5px;line-height:12px;color:#3a3a3a;letter-spacing:0.000px;font-weight:normal;transform:scaleX(0.9768);transform-origin:0 0;">Scale: 1:100</div><div class="t" style="left:566.40px;top:660.86px;font-size:9.5px;line-height:12px;color:#3a3a3a;letter-spacing:0.000px;font-weight:normal;transform:scaleX(0.9591);transform-origin:0 0;">Units: mm</div><div class="t" style="left:620.50px;top:660.86px;font-size:9.5px;line-height:12px;color:#3a3a3a;letter-spacing:0.000px;font-weight:normal;transform:scaleX(0.9858);transform-origin:0 0;">19041, 30267</div>
</body></html>
